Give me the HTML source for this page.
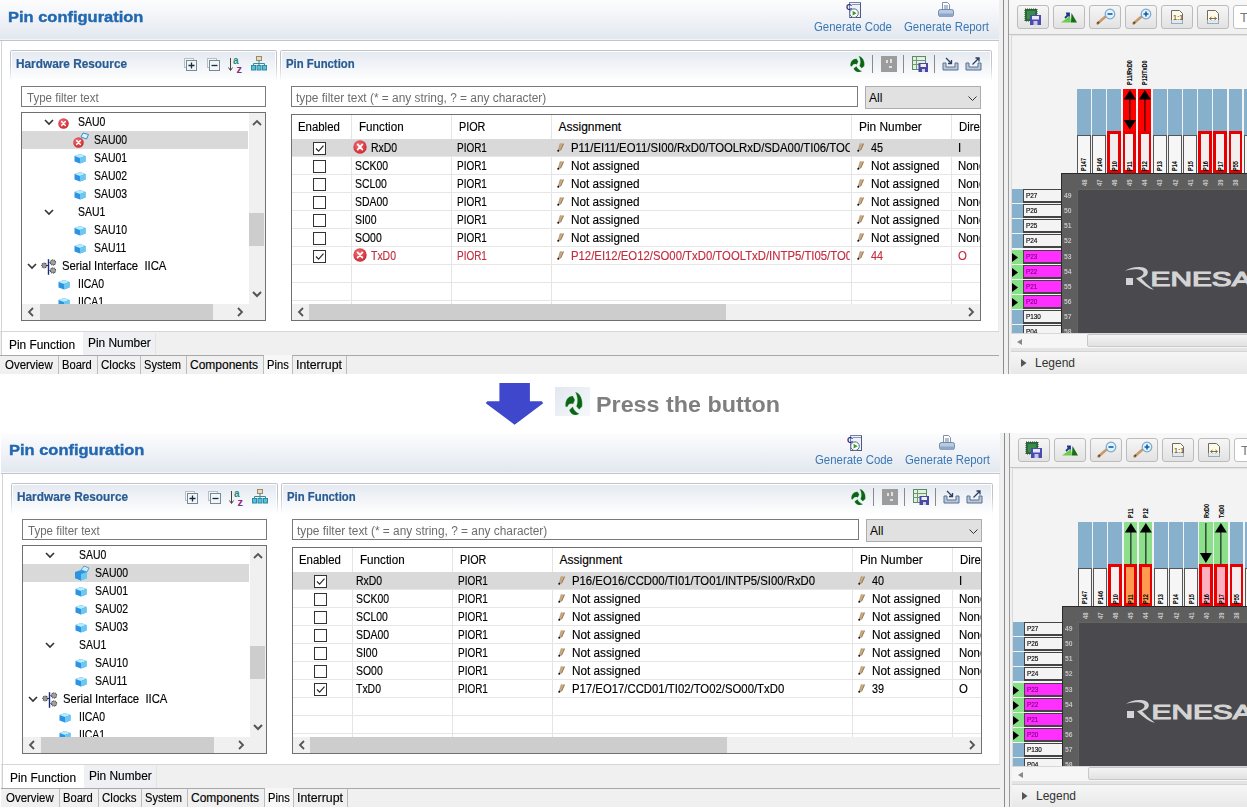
<!DOCTYPE html><html><head><meta charset="utf-8"><style>
*{margin:0;padding:0}
html,body{width:1247px;height:809px;overflow:hidden;background:#fff;font-family:"Liberation Sans", sans-serif;position:relative}
.ab{position:absolute}
svg.ab{display:block}
.panel{position:absolute;width:1247px;height:374px;overflow:hidden}
.hdr{left:0;top:0;width:1003px;height:40px;background:linear-gradient(#fdfdfe,#e2e7ef)}
.title{left:8px;top:8px;font-size:15.4px;font-weight:bold;color:#2268b0;white-space:nowrap;-webkit-text-stroke:.4px currentColor;transform:scaleX(1.07);transform-origin:0 0}
.link{font-size:12px;transform:scaleX(.95);transform-origin:0 0;color:#3a78b4;white-space:nowrap}
.sec{top:50px;height:31px;border-radius:2px 2px 0 0;background:linear-gradient(#e3e8f0,#fff);}
.sec::before{content:"";position:absolute;left:0;top:0;right:0;bottom:0;border:1px solid #c0c4ca;border-bottom:none;border-radius:2px 2px 0 0;box-shadow:inset 1px 1px 0 #fff,inset -1px 0 0 #fff;-webkit-mask:linear-gradient(#000 40%,transparent)}
.sect{font-size:12.2px;font-weight:bold;color:#275b92;white-space:nowrap;-webkit-text-stroke:.2px currentColor;transform-origin:0 0}
.inp{border:1px solid #7a7a7a;background:#fff;font-size:12px;white-space:nowrap;overflow:hidden}
.ph{position:absolute;left:4px;top:4px;color:#6d6d6d;transform-origin:0 0}
.combo{background:#e1e1e1;border:1px solid #adadad;font-size:12px}
.tree,.tbl{border:1px solid #707070;background:#fff;overflow:hidden}
.tt{font-size:12px;white-space:nowrap;color:#000;transform-origin:0 0;-webkit-text-stroke:.15px currentColor}
.clip{overflow:hidden}
.tab{font-size:12px;white-space:nowrap;color:#000;transform-origin:0 0;-webkit-text-stroke:.15px currentColor}
.cb{width:11px;height:11px;border:1px solid #333;background:#fff}
.btn{width:32px;height:24px;border:1px solid #bcbcbc;border-radius:3px;background:linear-gradient(#f6f6f6,#e2e2e2);box-sizing:border-box}
</style></head><body><div class="panel" style="left:0px;top:0px"><div class="ab hdr"></div><div class="ab title">Pin configuration</div><div class="ab link" style="left:814px;top:20px">Generate Code</div><div class="ab link" style="left:903.5px;top:20px">Generate Report</div><svg class="ab" style="left:846px;top:2px" width="16" height="16" viewBox="0 0 16 16"><rect x="3.5" y="0.5" width="11" height="15" fill="#eef2f8" stroke="#7080a8"/><path d="M14.5 1v15M4 15.5h11" stroke="#4a5a80"/><path d="M6.5 2.5h7" stroke="#2a3a80" stroke-dasharray="1 1"/><text x="0" y="8" font-size="8.5" font-family="Liberation Sans" fill="#1e2a78" font-weight="bold">C</text><circle cx="8" cy="11.2" r="4.3" fill="#fff" stroke="#5a6a8a"/><path d="M6.6 8.8L10.6 11.2L6.6 13.6Z" fill="#3a9a2a"/></svg><svg class="ab" style="left:938px;top:2px" width="16" height="16" viewBox="0 0 16 16"><path d="M4.5 0.5h5l2 2v6h-7z" fill="#fff" stroke="#8090a8"/><path d="M6 4h4M6 6h4" stroke="#6a7aa0"/><rect x="0.5" y="7.5" width="15" height="7" rx="2" fill="#b8cae2" stroke="#7088aa"/><rect x="1" y="11.5" width="14" height="3.5" rx="1" fill="#8ea6c6"/></svg><div class="ab" style="left:0;top:39px;width:999px;height:1px;background:#f2f6f8"></div><div class="ab" style="left:0;top:40px;width:999px;height:1px;background:#bfc5ca"></div><div class="ab" style="left:0;top:41px;width:999px;height:1px;background:#e2e6e9"></div><div class="ab" style="left:0;top:41px;width:999px;height:290px;background:#fff"></div><div class="ab" style="left:1px;top:41px;width:1px;height:315px;background:#d4d4d4"></div><div class="ab" style="left:998px;top:41px;width:1px;height:290px;background:#ececec"></div><div class="ab sec" style="left:10px;width:267px"></div><div class="ab sec" style="left:280px;width:712px"></div><div class="ab sect" style="left:16px;top:57px;transform:scaleX(.97)">Hardware Resource</div><div class="ab sect" style="left:286px;top:57px;transform:scaleX(.93)">Pin Function</div><svg class="ab" style="left:184px;top:58px" width="13" height="13" viewBox="0 0 13 13"><rect x="0.5" y="0.5" width="9" height="9" fill="#f4f8fb" stroke="#b4c0c8"/><rect x="2.5" y="2.5" width="10" height="10" fill="#f0f6fa" stroke="#7a8894"/><path d="M4.5 7.5h6M7.5 4.5v6" stroke="#1a2a3a" stroke-width="1.3"/></svg><svg class="ab" style="left:207px;top:58px" width="13" height="13" viewBox="0 0 13 13"><rect x="0.5" y="0.5" width="9" height="9" fill="#f4f8fb" stroke="#b4c0c8"/><rect x="2.5" y="2.5" width="10" height="10" fill="#f0f6fa" stroke="#7a8894"/><path d="M4.5 7.5h6" stroke="#1a2a3a" stroke-width="1.3"/></svg><svg class="ab" style="left:228px;top:56px" width="17" height="17" viewBox="0 0 17 17"><path d="M2.5 2v12M0.5 11.5l2 3l2-3" stroke="#444" fill="none"/><text x="5" y="7.5" font-size="10" font-weight="bold" font-family="Liberation Sans" fill="#2a8a7a">a</text><text x="8.5" y="16.5" font-size="11" font-weight="bold" font-family="Liberation Sans" fill="#8a2a7a">z</text></svg><svg class="ab" style="left:251px;top:56px" width="16" height="15" viewBox="0 0 16 15"><rect x="5.5" y="0.5" width="5" height="4" fill="#e8dcc0" stroke="#9a8a6a"/><path d="M8 4.5v3M2.5 7.5h11M2.5 7.5v2M8 7.5v2M13.5 7.5v2" stroke="#3a8a9a"/><rect x="0.5" y="9.5" width="4" height="4.5" fill="#5ac0d8" stroke="#2a8aa8"/><rect x="6" y="9.5" width="4" height="4.5" fill="#5ac0d8" stroke="#2a8aa8"/><rect x="11.5" y="9.5" width="4" height="4.5" fill="#5ac0d8" stroke="#2a8aa8"/></svg><svg class="ab" style="left:850px;top:56px" width="15" height="16" viewBox="0 0 16 16" preserveAspectRatio="none"><g fill="#0d6418" stroke="#7ad87a" stroke-width=".5" stroke-opacity=".5"><path d="M0.4 10C0.2 5.5 3 2.6 7 2.8L8.8 5.5L7.2 8.4C4.6 7.6 2.9 8.4 2.1 10.4Z"/><path d="M9.3 0C13.5 1 16 5 15.2 10L12.6 12.2L10.2 10C11.6 6.5 11.4 3.5 9.3 0Z"/><path d="M3.8 12.6L6.9 10.3C7.8 12.6 9.5 14 12.6 15.2C8.5 17.2 5.2 15.6 3.8 12.6Z"/></g></svg><div class="ab" style="left:872px;top:55px;width:1px;height:18px;background:#8a8a8a"></div><div class="ab" style="left:903px;top:55px;width:1px;height:18px;background:#8a8a8a"></div><div class="ab" style="left:934px;top:55px;width:1px;height:18px;background:#8a8a8a"></div><div class="ab" style="left:881px;top:56px;width:16px;height:16px;background:#9c9c9c"><div class="ab" style="left:5px;top:4px;width:2px;height:3px;background:#e0e0e0"></div><div class="ab" style="left:9px;top:3px;width:2px;height:4px;background:#e0e0e0"></div><div class="ab" style="left:8px;top:10px;width:3px;height:2px;background:#e0e0e0"></div></div><svg class="ab" style="left:912px;top:56px" width="16" height="16" viewBox="0 0 16 16"><rect x="0.5" y="0.5" width="13" height="13" fill="#e4f0dc" stroke="#5a8a6a"/><path d="M0.5 4.5h13M0.5 8.5h13M4.5 0.5v13" stroke="#6a9a7a"/><rect x="6.5" y="7" width="9.5" height="9" fill="#4848a8"/><rect x="8.5" y="8" width="5.5" height="3" fill="#f0f0f0"/><rect x="10" y="13" width="3" height="3" fill="#d0d0e0"/></svg><svg class="ab" style="left:942px;top:57px" width="17" height="14" viewBox="0 0 17 14"><path d="M1 6v7h15V6h-3v4H4V6z" fill="#b8c8dc" stroke="#5a7090"/><path d="M4 1l5.5 5.5M9.5 3v3.5H6" stroke="#2a4060" fill="none" stroke-width="1.3"/></svg><svg class="ab" style="left:965px;top:57px" width="17" height="14" viewBox="0 0 17 14"><path d="M1 6v7h15V6h-3v4H4V6z" fill="#b8c8dc" stroke="#5a7090"/><path d="M7.5 7.5L14 1M10.5 1H14v3.5" stroke="#2a4060" fill="none" stroke-width="1.3"/></svg><div class="ab inp" style="left:21px;top:86px;width:243px;height:19px"><span class="ph" style="left:5px;transform:scaleX(.96)">Type filter text</span></div><div class="ab inp" style="left:291px;top:86px;width:565px;height:19px"><span class="ph" style="transform:scaleX(.99)">type filter text (* = any string, ? = any character)</span></div><div class="ab combo" style="left:865px;top:86px;width:114px;height:21px"><span style="position:absolute;left:3px;top:4px">All</span><svg class="ab" style="left:102px;top:9px" width="10" height="6"><path d="M0.5 0.5l4 4l4-4" stroke="#333" fill="none"/></svg></div><div class="ab tree" style="left:21px;top:112px;width:243px;height:207px"><svg class="ab" style="left:22px;top:6px" width="10" height="7"><path d="M1 1l4 4l4-4" stroke="#333" stroke-width="1.6" fill="none"/></svg><svg class="ab" style="left:36px;top:5px" width="11" height="11" viewBox="0 0 14 14"><defs><radialGradient id="eg" cx="40%" cy="35%" r="70%"><stop offset="0" stop-color="#f07078"/><stop offset="1" stop-color="#c8262e"/></radialGradient></defs><circle cx="7" cy="7" r="6.7" fill="url(#eg)"/><path d="M4.6 4.4L9.4 9.6M9.4 4.4L4.6 9.6" stroke="#fff" stroke-width="1.7" stroke-linecap="round"/></svg><div class="ab tt" style="left:56px;top:2px;transform:scaleX(0.87);">SAU0</div><div class="ab" style="left:0;top:18px;width:226px;height:18px;background:#d9d9d9"></div><svg class="ab" style="left:58px;top:19px" width="9" height="8" viewBox="0 0 9 8"><path d="M1 5L3 1L8.5 2.5L6.5 7Z" fill="#dcf4fc" stroke="#3a8ac8" stroke-width="1"/></svg><svg class="ab" style="left:51px;top:24px" width="11" height="11" viewBox="0 0 14 14"><defs><radialGradient id="eg" cx="40%" cy="35%" r="70%"><stop offset="0" stop-color="#f07078"/><stop offset="1" stop-color="#c8262e"/></radialGradient></defs><circle cx="7" cy="7" r="6.7" fill="url(#eg)"/><path d="M4.6 4.4L9.4 9.6M9.4 4.4L4.6 9.6" stroke="#fff" stroke-width="1.7" stroke-linecap="round"/></svg><div class="ab tt" style="left:72px;top:20px;transform:scaleX(0.87);">SAU00</div><svg class="ab" style="left:52px;top:40px" width="12" height="11" viewBox="0 0 12 11"><path d="M0.5 3L6 1L11.5 3L11.5 8.5L6 10.5L0.5 8.5Z" fill="#2d94e2"/><path d="M0.5 3L6 1L11.5 3L6 5Z" fill="#b5ecfb"/><path d="M6 5L11.5 3L11.5 8.5L6 10.5Z" fill="#6cc8f2"/></svg><div class="ab tt" style="left:72px;top:38px;transform:scaleX(0.87);">SAU01</div><svg class="ab" style="left:52px;top:58px" width="12" height="11" viewBox="0 0 12 11"><path d="M0.5 3L6 1L11.5 3L11.5 8.5L6 10.5L0.5 8.5Z" fill="#2d94e2"/><path d="M0.5 3L6 1L11.5 3L6 5Z" fill="#b5ecfb"/><path d="M6 5L11.5 3L11.5 8.5L6 10.5Z" fill="#6cc8f2"/></svg><div class="ab tt" style="left:72px;top:56px;transform:scaleX(0.87);">SAU02</div><svg class="ab" style="left:52px;top:76px" width="12" height="11" viewBox="0 0 12 11"><path d="M0.5 3L6 1L11.5 3L11.5 8.5L6 10.5L0.5 8.5Z" fill="#2d94e2"/><path d="M0.5 3L6 1L11.5 3L6 5Z" fill="#b5ecfb"/><path d="M6 5L11.5 3L11.5 8.5L6 10.5Z" fill="#6cc8f2"/></svg><div class="ab tt" style="left:72px;top:74px;transform:scaleX(0.87);">SAU03</div><svg class="ab" style="left:22px;top:96px" width="10" height="7"><path d="M1 1l4 4l4-4" stroke="#333" stroke-width="1.6" fill="none"/></svg><div class="ab tt" style="left:56px;top:92px;transform:scaleX(0.87);">SAU1</div><svg class="ab" style="left:52px;top:112px" width="12" height="11" viewBox="0 0 12 11"><path d="M0.5 3L6 1L11.5 3L11.5 8.5L6 10.5L0.5 8.5Z" fill="#2d94e2"/><path d="M0.5 3L6 1L11.5 3L6 5Z" fill="#b5ecfb"/><path d="M6 5L11.5 3L11.5 8.5L6 10.5Z" fill="#6cc8f2"/></svg><div class="ab tt" style="left:72px;top:110px;transform:scaleX(0.87);">SAU10</div><svg class="ab" style="left:52px;top:130px" width="12" height="11" viewBox="0 0 12 11"><path d="M0.5 3L6 1L11.5 3L11.5 8.5L6 10.5L0.5 8.5Z" fill="#2d94e2"/><path d="M0.5 3L6 1L11.5 3L6 5Z" fill="#b5ecfb"/><path d="M6 5L11.5 3L11.5 8.5L6 10.5Z" fill="#6cc8f2"/></svg><div class="ab tt" style="left:72px;top:128px;transform:scaleX(0.87);">SAU11</div><svg class="ab" style="left:5px;top:150px" width="10" height="7"><path d="M1 1l4 4l4-4" stroke="#333" stroke-width="1.6" fill="none"/></svg><svg class="ab" style="left:19px;top:145px" width="17" height="17" viewBox="0 0 17 17"><circle cx="3.2" cy="7.5" r="2.4" fill="#9a9a9a" stroke="#3a3a3a" stroke-width="1.1" stroke-dasharray=".9 .7"/><path d="M5.5 7.5h1.5M8.5 4.5h1M8.5 12.5h1" stroke="#1a2a7a" stroke-width="1.1"/><path d="M7.5 1.2v15.6" stroke="#1a2a7a" stroke-width="1.4"/><circle cx="12" cy="4.5" r="2.6" fill="#a0a0a0" stroke="#3a3a3a" stroke-width="1.1" stroke-dasharray=".9 .7"/><circle cx="12" cy="12.5" r="2.6" fill="#a0a0a0" stroke="#3a3a3a" stroke-width="1.1" stroke-dasharray=".9 .7"/></svg><div class="ab tt" style="left:40px;top:146px;transform:scaleX(0.943);">Serial Interface&nbsp; IICA</div><svg class="ab" style="left:36px;top:166px" width="12" height="11" viewBox="0 0 12 11"><path d="M0.5 3L6 1L11.5 3L11.5 8.5L6 10.5L0.5 8.5Z" fill="#2d94e2"/><path d="M0.5 3L6 1L11.5 3L6 5Z" fill="#b5ecfb"/><path d="M6 5L11.5 3L11.5 8.5L6 10.5Z" fill="#6cc8f2"/></svg><div class="ab tt" style="left:56px;top:164px;transform:scaleX(0.87);">IICA0</div><svg class="ab" style="left:36px;top:184px" width="12" height="11" viewBox="0 0 12 11"><path d="M0.5 3L6 1L11.5 3L11.5 8.5L6 10.5L0.5 8.5Z" fill="#2d94e2"/><path d="M0.5 3L6 1L11.5 3L6 5Z" fill="#b5ecfb"/><path d="M6 5L11.5 3L11.5 8.5L6 10.5Z" fill="#6cc8f2"/></svg><div class="ab tt" style="left:56px;top:182px;transform:scaleX(0.87);">IICA1</div><div class="ab" style="left:227px;top:0;width:16px;height:191px;background:#f0f0f0"></div><svg class="ab" style="left:230px;top:6px" width="10" height="7"><path d="M1 6l4-4l4 4" stroke="#555" stroke-width="1.8" fill="none"/></svg><div class="ab" style="left:227px;top:100px;width:15px;height:33px;background:#cdcdcd"></div><svg class="ab" style="left:230px;top:178px" width="10" height="7"><path d="M1 1l4 4l4-4" stroke="#555" stroke-width="2" fill="none"/></svg><div class="ab" style="left:0;top:191px;width:243px;height:16px;background:#f0f0f0"></div><svg class="ab" style="left:5px;top:194px" width="7" height="10"><path d="M6 1l-4 4l4 4" stroke="#555" stroke-width="1.8" fill="none"/></svg><div class="ab" style="left:18px;top:191px;width:173px;height:16px;background:#cdcdcd"></div><svg class="ab" style="left:215px;top:194px" width="7" height="10"><path d="M1 1l4 4l-4 4" stroke="#555" stroke-width="1.8" fill="none"/></svg></div><div class="ab tbl" style="left:291px;top:114px;width:688px;height:205px"><div class="ab tt" style="left:6px;top:5px;transform:scaleX(0.95);">Enabled</div><div class="ab tt" style="left:66.5px;top:5px;transform:scaleX(0.97);">Function</div><div class="ab tt" style="left:166.5px;top:5px;transform:scaleX(0.9);">PIOR</div><div class="ab tt" style="left:266.5px;top:5px;transform:scaleX(1.0);">Assignment</div><div class="ab tt" style="left:566.5px;top:5px;transform:scaleX(0.99);">Pin Number</div><div class="ab tt" style="left:666.5px;top:5px;transform:scaleX(0.95);">Dire</div><div class="ab" style="left:59px;top:0;width:1px;height:189px;background:#e4e4e4"></div><div class="ab" style="left:159px;top:0;width:1px;height:189px;background:#e4e4e4"></div><div class="ab" style="left:259px;top:0;width:1px;height:189px;background:#e4e4e4"></div><div class="ab" style="left:559px;top:0;width:1px;height:189px;background:#e4e4e4"></div><div class="ab" style="left:659px;top:0;width:1px;height:189px;background:#e4e4e4"></div><div class="ab" style="left:0;top:41px;width:688px;height:1px;background:#e6e6e6"></div><div class="ab" style="left:0;top:59px;width:688px;height:1px;background:#e6e6e6"></div><div class="ab" style="left:0;top:77px;width:688px;height:1px;background:#e6e6e6"></div><div class="ab" style="left:0;top:95px;width:688px;height:1px;background:#e6e6e6"></div><div class="ab" style="left:0;top:113px;width:688px;height:1px;background:#e6e6e6"></div><div class="ab" style="left:0;top:131px;width:688px;height:1px;background:#e6e6e6"></div><div class="ab" style="left:0;top:149px;width:688px;height:1px;background:#e6e6e6"></div><div class="ab" style="left:0;top:167px;width:688px;height:1px;background:#e6e6e6"></div><div class="ab" style="left:0;top:185px;width:688px;height:1px;background:#e6e6e6"></div><div class="ab" style="left:0;top:24px;width:688px;height:17px;background:#d9d9d9"></div><div class="ab cb" style="left:21px;top:27px"><svg width="13" height="13" style="position:absolute;left:-1px;top:-1px;display:block"><path d="M3 6.5l2.6 2.6l4.9-5.4" stroke="#2a2a2a" stroke-width="1.2" fill="none"/></svg></div><svg class="ab" style="left:61px;top:25px" width="14" height="14" viewBox="0 0 14 14"><defs><radialGradient id="eg" cx="40%" cy="35%" r="70%"><stop offset="0" stop-color="#f07078"/><stop offset="1" stop-color="#c8262e"/></radialGradient></defs><circle cx="7" cy="7" r="6.7" fill="url(#eg)"/><path d="M4.6 4.4L9.4 9.6M9.4 4.4L4.6 9.6" stroke="#fff" stroke-width="1.7" stroke-linecap="round"/></svg><div class="ab tt" style="left:79px;top:26px;transform:scaleX(0.87);color:#000">RxD0</div><div class="ab tt" style="left:165px;top:26px;transform:scaleX(0.83);color:#000">PIOR1</div><svg class="ab" style="left:265px;top:28px" width="7" height="9" viewBox="0 0 7 9"><path d="M3.3 0.3L6.6 0.6L3.6 7.3L0.9 8.3Z" fill="#c9aa84"/><path d="M6.6 0.6L3.6 7.3" stroke="#8a6a48" stroke-width=".9"/><path d="M3.3 0.3L0.9 8.3" stroke="#a88860" stroke-width=".6"/><circle cx="1.3" cy="7.8" r="1" fill="#111"/></svg><div class="ab tt" style="left:279px;top:26px;transform:scaleX(0.945);width:295.2px;overflow:hidden;color:#000">P11/EI11/EO11/SI00/RxD0/TOOLRxD/SDA00/TI06/TOO</div><svg class="ab" style="left:565px;top:28px" width="7" height="9" viewBox="0 0 7 9"><path d="M3.3 0.3L6.6 0.6L3.6 7.3L0.9 8.3Z" fill="#c9aa84"/><path d="M6.6 0.6L3.6 7.3" stroke="#8a6a48" stroke-width=".9"/><path d="M3.3 0.3L0.9 8.3" stroke="#a88860" stroke-width=".6"/><circle cx="1.3" cy="7.8" r="1" fill="#111"/></svg><div class="ab tt" style="left:579px;top:26px;transform:scaleX(0.9);color:#000">45</div><div class="ab tt" style="left:666px;top:26px;transform:scaleX(0.95);width:23.2px;overflow:hidden;color:#000">I</div><div class="ab cb" style="left:21px;top:45px"></div><div class="ab tt" style="left:63px;top:44px;transform:scaleX(0.87);color:#000">SCK00</div><div class="ab tt" style="left:165px;top:44px;transform:scaleX(0.83);color:#000">PIOR1</div><svg class="ab" style="left:265px;top:46px" width="7" height="9" viewBox="0 0 7 9"><path d="M3.3 0.3L6.6 0.6L3.6 7.3L0.9 8.3Z" fill="#c9aa84"/><path d="M6.6 0.6L3.6 7.3" stroke="#8a6a48" stroke-width=".9"/><path d="M3.3 0.3L0.9 8.3" stroke="#a88860" stroke-width=".6"/><circle cx="1.3" cy="7.8" r="1" fill="#111"/></svg><div class="ab tt" style="left:279px;top:44px;transform:scaleX(0.98);width:284.7px;overflow:hidden;color:#000">Not assigned</div><svg class="ab" style="left:565px;top:46px" width="7" height="9" viewBox="0 0 7 9"><path d="M3.3 0.3L6.6 0.6L3.6 7.3L0.9 8.3Z" fill="#c9aa84"/><path d="M6.6 0.6L3.6 7.3" stroke="#8a6a48" stroke-width=".9"/><path d="M3.3 0.3L0.9 8.3" stroke="#a88860" stroke-width=".6"/><circle cx="1.3" cy="7.8" r="1" fill="#111"/></svg><div class="ab tt" style="left:579px;top:44px;transform:scaleX(0.98);color:#000">Not assigned</div><div class="ab tt" style="left:666px;top:44px;transform:scaleX(0.95);width:23.2px;overflow:hidden;color:#000">None</div><div class="ab cb" style="left:21px;top:63px"></div><div class="ab tt" style="left:63px;top:62px;transform:scaleX(0.87);color:#000">SCL00</div><div class="ab tt" style="left:165px;top:62px;transform:scaleX(0.83);color:#000">PIOR1</div><svg class="ab" style="left:265px;top:64px" width="7" height="9" viewBox="0 0 7 9"><path d="M3.3 0.3L6.6 0.6L3.6 7.3L0.9 8.3Z" fill="#c9aa84"/><path d="M6.6 0.6L3.6 7.3" stroke="#8a6a48" stroke-width=".9"/><path d="M3.3 0.3L0.9 8.3" stroke="#a88860" stroke-width=".6"/><circle cx="1.3" cy="7.8" r="1" fill="#111"/></svg><div class="ab tt" style="left:279px;top:62px;transform:scaleX(0.98);width:284.7px;overflow:hidden;color:#000">Not assigned</div><svg class="ab" style="left:565px;top:64px" width="7" height="9" viewBox="0 0 7 9"><path d="M3.3 0.3L6.6 0.6L3.6 7.3L0.9 8.3Z" fill="#c9aa84"/><path d="M6.6 0.6L3.6 7.3" stroke="#8a6a48" stroke-width=".9"/><path d="M3.3 0.3L0.9 8.3" stroke="#a88860" stroke-width=".6"/><circle cx="1.3" cy="7.8" r="1" fill="#111"/></svg><div class="ab tt" style="left:579px;top:62px;transform:scaleX(0.98);color:#000">Not assigned</div><div class="ab tt" style="left:666px;top:62px;transform:scaleX(0.95);width:23.2px;overflow:hidden;color:#000">None</div><div class="ab cb" style="left:21px;top:81px"></div><div class="ab tt" style="left:63px;top:80px;transform:scaleX(0.87);color:#000">SDA00</div><div class="ab tt" style="left:165px;top:80px;transform:scaleX(0.83);color:#000">PIOR1</div><svg class="ab" style="left:265px;top:82px" width="7" height="9" viewBox="0 0 7 9"><path d="M3.3 0.3L6.6 0.6L3.6 7.3L0.9 8.3Z" fill="#c9aa84"/><path d="M6.6 0.6L3.6 7.3" stroke="#8a6a48" stroke-width=".9"/><path d="M3.3 0.3L0.9 8.3" stroke="#a88860" stroke-width=".6"/><circle cx="1.3" cy="7.8" r="1" fill="#111"/></svg><div class="ab tt" style="left:279px;top:80px;transform:scaleX(0.98);width:284.7px;overflow:hidden;color:#000">Not assigned</div><svg class="ab" style="left:565px;top:82px" width="7" height="9" viewBox="0 0 7 9"><path d="M3.3 0.3L6.6 0.6L3.6 7.3L0.9 8.3Z" fill="#c9aa84"/><path d="M6.6 0.6L3.6 7.3" stroke="#8a6a48" stroke-width=".9"/><path d="M3.3 0.3L0.9 8.3" stroke="#a88860" stroke-width=".6"/><circle cx="1.3" cy="7.8" r="1" fill="#111"/></svg><div class="ab tt" style="left:579px;top:80px;transform:scaleX(0.98);color:#000">Not assigned</div><div class="ab tt" style="left:666px;top:80px;transform:scaleX(0.95);width:23.2px;overflow:hidden;color:#000">None</div><div class="ab cb" style="left:21px;top:99px"></div><div class="ab tt" style="left:63px;top:98px;transform:scaleX(0.87);color:#000">SI00</div><div class="ab tt" style="left:165px;top:98px;transform:scaleX(0.83);color:#000">PIOR1</div><svg class="ab" style="left:265px;top:100px" width="7" height="9" viewBox="0 0 7 9"><path d="M3.3 0.3L6.6 0.6L3.6 7.3L0.9 8.3Z" fill="#c9aa84"/><path d="M6.6 0.6L3.6 7.3" stroke="#8a6a48" stroke-width=".9"/><path d="M3.3 0.3L0.9 8.3" stroke="#a88860" stroke-width=".6"/><circle cx="1.3" cy="7.8" r="1" fill="#111"/></svg><div class="ab tt" style="left:279px;top:98px;transform:scaleX(0.98);width:284.7px;overflow:hidden;color:#000">Not assigned</div><svg class="ab" style="left:565px;top:100px" width="7" height="9" viewBox="0 0 7 9"><path d="M3.3 0.3L6.6 0.6L3.6 7.3L0.9 8.3Z" fill="#c9aa84"/><path d="M6.6 0.6L3.6 7.3" stroke="#8a6a48" stroke-width=".9"/><path d="M3.3 0.3L0.9 8.3" stroke="#a88860" stroke-width=".6"/><circle cx="1.3" cy="7.8" r="1" fill="#111"/></svg><div class="ab tt" style="left:579px;top:98px;transform:scaleX(0.98);color:#000">Not assigned</div><div class="ab tt" style="left:666px;top:98px;transform:scaleX(0.95);width:23.2px;overflow:hidden;color:#000">None</div><div class="ab cb" style="left:21px;top:117px"></div><div class="ab tt" style="left:63px;top:116px;transform:scaleX(0.87);color:#000">SO00</div><div class="ab tt" style="left:165px;top:116px;transform:scaleX(0.83);color:#000">PIOR1</div><svg class="ab" style="left:265px;top:118px" width="7" height="9" viewBox="0 0 7 9"><path d="M3.3 0.3L6.6 0.6L3.6 7.3L0.9 8.3Z" fill="#c9aa84"/><path d="M6.6 0.6L3.6 7.3" stroke="#8a6a48" stroke-width=".9"/><path d="M3.3 0.3L0.9 8.3" stroke="#a88860" stroke-width=".6"/><circle cx="1.3" cy="7.8" r="1" fill="#111"/></svg><div class="ab tt" style="left:279px;top:116px;transform:scaleX(0.98);width:284.7px;overflow:hidden;color:#000">Not assigned</div><svg class="ab" style="left:565px;top:118px" width="7" height="9" viewBox="0 0 7 9"><path d="M3.3 0.3L6.6 0.6L3.6 7.3L0.9 8.3Z" fill="#c9aa84"/><path d="M6.6 0.6L3.6 7.3" stroke="#8a6a48" stroke-width=".9"/><path d="M3.3 0.3L0.9 8.3" stroke="#a88860" stroke-width=".6"/><circle cx="1.3" cy="7.8" r="1" fill="#111"/></svg><div class="ab tt" style="left:579px;top:116px;transform:scaleX(0.98);color:#000">Not assigned</div><div class="ab tt" style="left:666px;top:116px;transform:scaleX(0.95);width:23.2px;overflow:hidden;color:#000">None</div><div class="ab cb" style="left:21px;top:135px"><svg width="13" height="13" style="position:absolute;left:-1px;top:-1px;display:block"><path d="M3 6.5l2.6 2.6l4.9-5.4" stroke="#2a2a2a" stroke-width="1.2" fill="none"/></svg></div><svg class="ab" style="left:61px;top:133px" width="14" height="14" viewBox="0 0 14 14"><defs><radialGradient id="eg" cx="40%" cy="35%" r="70%"><stop offset="0" stop-color="#f07078"/><stop offset="1" stop-color="#c8262e"/></radialGradient></defs><circle cx="7" cy="7" r="6.7" fill="url(#eg)"/><path d="M4.6 4.4L9.4 9.6M9.4 4.4L4.6 9.6" stroke="#fff" stroke-width="1.7" stroke-linecap="round"/></svg><div class="ab tt" style="left:79px;top:134px;transform:scaleX(0.87);color:#c42c3e">TxD0</div><div class="ab tt" style="left:165px;top:134px;transform:scaleX(0.83);color:#c42c3e">PIOR1</div><svg class="ab" style="left:265px;top:136px" width="7" height="9" viewBox="0 0 7 9"><path d="M3.3 0.3L6.6 0.6L3.6 7.3L0.9 8.3Z" fill="#c9aa84"/><path d="M6.6 0.6L3.6 7.3" stroke="#8a6a48" stroke-width=".9"/><path d="M3.3 0.3L0.9 8.3" stroke="#a88860" stroke-width=".6"/><circle cx="1.3" cy="7.8" r="1" fill="#111"/></svg><div class="ab tt" style="left:279px;top:134px;transform:scaleX(0.945);width:295.2px;overflow:hidden;color:#c42c3e">P12/EI12/EO12/SO00/TxD0/TOOLTxD/INTP5/TI05/TO0</div><svg class="ab" style="left:565px;top:136px" width="7" height="9" viewBox="0 0 7 9"><path d="M3.3 0.3L6.6 0.6L3.6 7.3L0.9 8.3Z" fill="#c9aa84"/><path d="M6.6 0.6L3.6 7.3" stroke="#8a6a48" stroke-width=".9"/><path d="M3.3 0.3L0.9 8.3" stroke="#a88860" stroke-width=".6"/><circle cx="1.3" cy="7.8" r="1" fill="#111"/></svg><div class="ab tt" style="left:579px;top:134px;transform:scaleX(0.9);color:#c42c3e">44</div><div class="ab tt" style="left:666px;top:134px;transform:scaleX(0.95);width:23.2px;overflow:hidden;color:#c42c3e">O</div><div class="ab" style="left:0;top:189px;width:688px;height:16px;background:#f0f0f0"></div><svg class="ab" style="left:5px;top:192px" width="7" height="10"><path d="M6 1l-4 4l4 4" stroke="#555" stroke-width="1.8" fill="none"/></svg><div class="ab" style="left:17px;top:189px;width:417px;height:16px;background:#cdcdcd"></div><svg class="ab" style="left:676px;top:192px" width="7" height="10"><path d="M1 1l4 4l-4 4" stroke="#555" stroke-width="1.8" fill="none"/></svg></div><div class="ab" style="left:0;top:331px;width:999px;height:24px;background:#f0f0f0"></div><div class="ab" style="left:0;top:331px;width:999px;height:1px;background:#d6d6d6"></div><div class="ab" style="left:1px;top:331px;width:1px;height:25px;background:#d0d0d0"></div><div class="ab" style="left:2px;top:332px;width:81px;height:23px;background:#fff"></div><div class="ab tab" style="left:9px;top:338px;transform:scaleX(0.99);">Pin Function</div><div class="ab" style="left:83px;top:333px;width:73px;height:22px;background:#eef0f3;border-right:1px solid #e2e2e2;box-sizing:border-box"></div><div class="ab tab" style="left:88px;top:336px;transform:scaleX(0.99);">Pin Number</div><div class="ab" style="left:0;top:355px;width:1001px;height:1px;background:#a8a8a8"></div><div class="ab" style="left:0;top:356px;width:999px;height:18px;background:#f0f0f0"></div><div class="ab tab" style="left:5px;top:358px;transform:scaleX(0.954);">Overview</div><div class="ab" style="left:58px;top:356px;width:1px;height:18px;background:#bcbcbc"></div><div class="ab tab" style="left:62px;top:358px;transform:scaleX(0.93);">Board</div><div class="ab" style="left:97px;top:356px;width:1px;height:18px;background:#bcbcbc"></div><div class="ab tab" style="left:101px;top:358px;transform:scaleX(0.96);">Clocks</div><div class="ab" style="left:140px;top:356px;width:1px;height:18px;background:#bcbcbc"></div><div class="ab tab" style="left:144px;top:358px;transform:scaleX(0.925);">System</div><div class="ab" style="left:186px;top:356px;width:1px;height:18px;background:#bcbcbc"></div><div class="ab tab" style="left:190px;top:358px;transform:scaleX(1.0);">Components</div><div class="ab" style="left:263px;top:356px;width:1px;height:18px;background:#bcbcbc"></div><div class="ab" style="left:264px;top:355px;width:28px;height:19px;background:#f7f7f7"></div><div class="ab tab" style="left:267px;top:358px;transform:scaleX(0.93);">Pins</div><div class="ab" style="left:292px;top:356px;width:1px;height:18px;background:#bcbcbc"></div><div class="ab tab" style="left:296px;top:358px;transform:scaleX(1.03);">Interrupt</div><div class="ab" style="left:346px;top:356px;width:1px;height:18px;background:#bcbcbc"></div><div class="ab" style="left:999px;top:0;width:10px;height:374px;background:#f0f0f0"></div><div class="ab" style="left:1003px;top:0;width:1px;height:374px;background:#8c8c8c"></div><div class="ab" style="left:1008px;top:0;width:1px;height:374px;background:#9c9c9c"></div><div class="ab" style="left:1009px;top:0;width:238px;height:374px;background:#f0f0f0"></div><div class="ab" style="left:1009px;top:0;width:238px;height:34px;background:linear-gradient(#f8f8f8,#f0f0f0)"></div><div class="ab btn" style="left:1017px;top:5px"></div><div class="ab btn" style="left:1053px;top:5px"></div><div class="ab btn" style="left:1089px;top:5px"></div><div class="ab btn" style="left:1125px;top:5px"></div><div class="ab btn" style="left:1161px;top:5px"></div><div class="ab btn" style="left:1197px;top:5px"></div><div class="ab" style="left:1233px;top:5px;width:30px;height:24px;background:#fff;border:1px solid #c0c0c0;border-radius:3px;box-sizing:border-box"><span style="position:absolute;left:6px;top:4px;color:#777;font-size:13px">T</span></div><svg class="ab" style="left:1024px;top:8px" width="18" height="18" viewBox="0 0 18 18"><path d="M1 1h12v12h-12z" fill="#2d6a3a" stroke="#2a4a2a" stroke-dasharray="1 1"/><path d="M3 3h8v8h-8z" fill="#3a8a4a"/><rect x="6" y="7" width="11" height="10" fill="#4a4ab0"/><rect x="8" y="8" width="7" height="3.5" fill="#e8e8f8"/><rect x="9.5" y="13" width="4" height="4" fill="#c8c8e8"/></svg><svg class="ab" style="left:1061px;top:12px" width="17" height="11" viewBox="0 0 17 11"><path d="M0 10.5L9 4L10 10.5Z" fill="#6acc4a"/><path d="M10 10.5L10.5 1L16 10.5Z" fill="#1a6a1a"/><path d="M4 6L7.5 2.5M5 1.5h3v3" stroke="#1a3a8a" stroke-width="1.8" fill="none"/></svg><svg class="ab" style="left:1096px;top:8px" width="20" height="17" viewBox="0 0 20 17"><path d="M1.5 15.5L9 9" stroke="#c89a6a" stroke-width="2.6" stroke-linecap="round"/><path d="M1.5 15.5L3 14" stroke="#6a4a2a" stroke-width="2"/><circle cx="14" cy="6" r="4.8" fill="#dff2ff" stroke="#7aa8cc" stroke-width="1.2"/><path d="M11.5 6h5" stroke="#1a5a9a" stroke-width="1.6"/></svg><svg class="ab" style="left:1132px;top:8px" width="20" height="17" viewBox="0 0 20 17"><path d="M1.5 15.5L9 9" stroke="#c89a6a" stroke-width="2.6" stroke-linecap="round"/><path d="M1.5 15.5L3 14" stroke="#6a4a2a" stroke-width="2"/><circle cx="14" cy="6" r="4.8" fill="#dff2ff" stroke="#7aa8cc" stroke-width="1.2"/><path d="M11.5 6h5M14 3.5v5" stroke="#1a5a9a" stroke-width="1.6"/></svg><svg class="ab" style="left:1171px;top:10px" width="12" height="14" viewBox="0 0 12 14"><path d="M0.5 0.5h8l3 3v10h-11z" fill="#fdfbe8" stroke="#6a6a6a"/><path d="M0.5 10h11v3.5h-11z" fill="#dbeaf8"/><text x="2" y="10" font-size="7" font-weight="bold" font-family="Liberation Sans" fill="#8a6a3a">1:1</text></svg><svg class="ab" style="left:1207px;top:10px" width="12" height="14" viewBox="0 0 12 14"><path d="M0.5 0.5h8l3 3v10h-11z" fill="#fdfbe8" stroke="#6a6a6a"/><path d="M0.5 10h11v3.5h-11z" fill="#dbeaf8"/><path d="M2.5 8.5h7M2.5 8.5l2-1.5M2.5 8.5l2 1.5M9.5 8.5l-2-1.5M9.5 8.5l-2 1.5" stroke="#8a6a3a" stroke-width="1"/></svg><div class="ab" style="left:1009px;top:34px;width:238px;height:1px;background:#c6c6c6"></div><div class="ab" style="left:1011px;top:35px;width:236px;height:1px;background:#e4e4e4"></div><div class="ab" style="left:1011px;top:35px;width:1px;height:298px;background:#dadada"></div><div class="ab" style="left:1012px;top:36px;width:235px;height:297px;background:#f3f3f3;overflow:hidden"><div class="ab" style="left:65.1px;top:53px;width:13.75px;height:46px;background:#86b0cc"></div><div class="ab" style="left:65.1px;top:99px;width:13.75px;height:38px;background:#f6f6f6;border:1px solid #555;border-bottom:none;box-sizing:border-box"></div><div class="ab" style="left:71.975px;top:135px;width:0;height:0"><div style="position:absolute;left:0;top:0;transform:rotate(-90deg) scaleX(0.8);transform-origin:0 0;white-space:nowrap;font-size:7px;line-height:7px;height:7px;color:#000;font-weight:bold;margin-left:-3.50px">P147</div></div><div class="ab" style="left:80.25px;top:53px;width:13.75px;height:46px;background:#86b0cc"></div><div class="ab" style="left:80.25px;top:99px;width:13.75px;height:38px;background:#f6f6f6;border:1px solid #555;border-bottom:none;box-sizing:border-box"></div><div class="ab" style="left:87.125px;top:135px;width:0;height:0"><div style="position:absolute;left:0;top:0;transform:rotate(-90deg) scaleX(0.8);transform-origin:0 0;white-space:nowrap;font-size:7px;line-height:7px;height:7px;color:#000;font-weight:bold;margin-left:-3.50px">P146</div></div><div class="ab" style="left:95.4px;top:53px;width:13.75px;height:46px;background:#86b0cc"></div><div class="ab" style="left:95.4px;top:95px;width:13.75px;height:42px;background:#e80000"></div><div class="ab" style="left:98.20px;top:98px;width:8.15px;height:36px;background:#f2eeee"></div><div class="ab" style="left:102.275px;top:135px;width:0;height:0"><div style="position:absolute;left:0;top:0;transform:rotate(-90deg) scaleX(0.8);transform-origin:0 0;white-space:nowrap;font-size:7px;line-height:7px;height:7px;color:#000;font-weight:bold;margin-left:-3.50px">P10</div></div><div class="ab" style="left:110.55px;top:53px;width:13.75px;height:46px;background:#ff0000"></div><svg class="ab" style="left:110.55px;top:53px" width="13.75" height="42" viewBox="0 0 13 42"><path d="M0.5 10.5L6.5 1L12.5 10.5Z" fill="#000"/><path d="M6.5 10V31" stroke="#000" stroke-width="1"/><path d="M0.5 31L6.5 40.5L12.5 31Z" fill="#000"/></svg><div class="ab" style="left:117.425px;top:49px;width:0;height:0"><div style="position:absolute;left:0;top:0;transform:rotate(-90deg) scaleX(0.78);transform-origin:0 0;white-space:nowrap;font-size:7px;line-height:7px;height:7px;color:#000;font-weight:bold;margin-left:-3.50px">P11/RxD0</div></div><div class="ab" style="left:110.55px;top:95px;width:13.75px;height:42px;background:#e80000"></div><div class="ab" style="left:113.35px;top:98px;width:8.15px;height:36px;background:#f4f0f0"></div><div class="ab" style="left:117.425px;top:135px;width:0;height:0"><div style="position:absolute;left:0;top:0;transform:rotate(-90deg) scaleX(0.8);transform-origin:0 0;white-space:nowrap;font-size:7px;line-height:7px;height:7px;color:#000;font-weight:bold;margin-left:-3.50px">P11</div></div><div class="ab" style="left:125.7px;top:53px;width:13.75px;height:46px;background:#ff0000"></div><svg class="ab" style="left:125.7px;top:53px" width="13.75" height="42" viewBox="0 0 13 42"><path d="M0.5 10.5L6.5 1L12.5 10.5Z" fill="#000"/><path d="M6.5 10V42" stroke="#000" stroke-width="1"/></svg><div class="ab" style="left:132.575px;top:49px;width:0;height:0"><div style="position:absolute;left:0;top:0;transform:rotate(-90deg) scaleX(0.78);transform-origin:0 0;white-space:nowrap;font-size:7px;line-height:7px;height:7px;color:#000;font-weight:bold;margin-left:-3.50px">P12/TxD0</div></div><div class="ab" style="left:125.7px;top:95px;width:13.75px;height:42px;background:#e80000"></div><div class="ab" style="left:128.50px;top:98px;width:8.15px;height:36px;background:#f4f0f0"></div><div class="ab" style="left:132.575px;top:135px;width:0;height:0"><div style="position:absolute;left:0;top:0;transform:rotate(-90deg) scaleX(0.8);transform-origin:0 0;white-space:nowrap;font-size:7px;line-height:7px;height:7px;color:#000;font-weight:bold;margin-left:-3.50px">P12</div></div><div class="ab" style="left:140.85px;top:53px;width:13.75px;height:46px;background:#86b0cc"></div><div class="ab" style="left:140.85px;top:99px;width:13.75px;height:38px;background:#f6f6f6;border:1px solid #555;border-bottom:none;box-sizing:border-box"></div><div class="ab" style="left:147.725px;top:135px;width:0;height:0"><div style="position:absolute;left:0;top:0;transform:rotate(-90deg) scaleX(0.8);transform-origin:0 0;white-space:nowrap;font-size:7px;line-height:7px;height:7px;color:#000;font-weight:bold;margin-left:-3.50px">P13</div></div><div class="ab" style="left:156.0px;top:53px;width:13.75px;height:46px;background:#86b0cc"></div><div class="ab" style="left:156.0px;top:99px;width:13.75px;height:38px;background:#f6f6f6;border:1px solid #555;border-bottom:none;box-sizing:border-box"></div><div class="ab" style="left:162.875px;top:135px;width:0;height:0"><div style="position:absolute;left:0;top:0;transform:rotate(-90deg) scaleX(0.8);transform-origin:0 0;white-space:nowrap;font-size:7px;line-height:7px;height:7px;color:#000;font-weight:bold;margin-left:-3.50px">P14</div></div><div class="ab" style="left:171.15px;top:53px;width:13.75px;height:46px;background:#86b0cc"></div><div class="ab" style="left:171.15px;top:99px;width:13.75px;height:38px;background:#f6f6f6;border:1px solid #555;border-bottom:none;box-sizing:border-box"></div><div class="ab" style="left:178.025px;top:135px;width:0;height:0"><div style="position:absolute;left:0;top:0;transform:rotate(-90deg) scaleX(0.8);transform-origin:0 0;white-space:nowrap;font-size:7px;line-height:7px;height:7px;color:#000;font-weight:bold;margin-left:-3.50px">P15</div></div><div class="ab" style="left:186.3px;top:53px;width:13.75px;height:46px;background:#86b0cc"></div><div class="ab" style="left:186.3px;top:95px;width:13.75px;height:42px;background:#e80000"></div><div class="ab" style="left:189.10px;top:98px;width:8.15px;height:36px;background:#f4eeee"></div><div class="ab" style="left:193.175px;top:135px;width:0;height:0"><div style="position:absolute;left:0;top:0;transform:rotate(-90deg) scaleX(0.8);transform-origin:0 0;white-space:nowrap;font-size:7px;line-height:7px;height:7px;color:#000;font-weight:bold;margin-left:-3.50px">P16</div></div><div class="ab" style="left:201.45px;top:53px;width:13.75px;height:46px;background:#86b0cc"></div><div class="ab" style="left:201.45px;top:95px;width:13.75px;height:42px;background:#e80000"></div><div class="ab" style="left:204.25px;top:98px;width:8.15px;height:36px;background:#f4eeee"></div><div class="ab" style="left:208.325px;top:135px;width:0;height:0"><div style="position:absolute;left:0;top:0;transform:rotate(-90deg) scaleX(0.8);transform-origin:0 0;white-space:nowrap;font-size:7px;line-height:7px;height:7px;color:#000;font-weight:bold;margin-left:-3.50px">P17</div></div><div class="ab" style="left:216.6px;top:53px;width:13.75px;height:46px;background:#86b0cc"></div><div class="ab" style="left:216.6px;top:95px;width:13.75px;height:42px;background:#e80000"></div><div class="ab" style="left:219.40px;top:98px;width:8.15px;height:36px;background:#f4eeee"></div><div class="ab" style="left:223.475px;top:135px;width:0;height:0"><div style="position:absolute;left:0;top:0;transform:rotate(-90deg) scaleX(0.8);transform-origin:0 0;white-space:nowrap;font-size:7px;line-height:7px;height:7px;color:#000;font-weight:bold;margin-left:-3.50px">P55</div></div><div class="ab" style="left:231.75px;top:53px;width:13.75px;height:46px;background:#86b0cc"></div><div class="ab" style="left:231.75px;top:99px;width:13.75px;height:38px;background:#f6f6f6;border:1px solid #555;border-bottom:none;box-sizing:border-box"></div><div class="ab" style="left:238.625px;top:135px;width:0;height:0"><div style="position:absolute;left:0;top:0;transform:rotate(-90deg) scaleX(0.8);transform-origin:0 0;white-space:nowrap;font-size:7px;line-height:7px;height:7px;color:#000;font-weight:bold;margin-left:-3.50px">P</div></div><div class="ab" style="left:49px;top:137px;width:300px;height:200px;background:#5e5e5e;border-left:1px solid #2a2a2a;border-top:1px solid #2a2a2a;box-sizing:border-box"></div><div class="ab" style="left:65px;top:153px;width:300px;height:200px;background:#4a494e;border-left:1px solid #646464;border-top:1px solid #646464"></div><div class="ab" style="left:72.1px;top:150px;width:0;height:0"><div style="position:absolute;left:0;top:0;transform:rotate(-90deg) scaleX(0.85);transform-origin:0 0;white-space:nowrap;font-size:7px;line-height:7px;height:7px;color:#c8c8c8;font-weight:bold;margin-left:-3.50px">48</div></div><div class="ab" style="left:87.25px;top:150px;width:0;height:0"><div style="position:absolute;left:0;top:0;transform:rotate(-90deg) scaleX(0.85);transform-origin:0 0;white-space:nowrap;font-size:7px;line-height:7px;height:7px;color:#c8c8c8;font-weight:bold;margin-left:-3.50px">47</div></div><div class="ab" style="left:102.4px;top:150px;width:0;height:0"><div style="position:absolute;left:0;top:0;transform:rotate(-90deg) scaleX(0.85);transform-origin:0 0;white-space:nowrap;font-size:7px;line-height:7px;height:7px;color:#c8c8c8;font-weight:bold;margin-left:-3.50px">46</div></div><div class="ab" style="left:117.55px;top:150px;width:0;height:0"><div style="position:absolute;left:0;top:0;transform:rotate(-90deg) scaleX(0.85);transform-origin:0 0;white-space:nowrap;font-size:7px;line-height:7px;height:7px;color:#c8c8c8;font-weight:bold;margin-left:-3.50px">45</div></div><div class="ab" style="left:132.7px;top:150px;width:0;height:0"><div style="position:absolute;left:0;top:0;transform:rotate(-90deg) scaleX(0.85);transform-origin:0 0;white-space:nowrap;font-size:7px;line-height:7px;height:7px;color:#c8c8c8;font-weight:bold;margin-left:-3.50px">44</div></div><div class="ab" style="left:147.85px;top:150px;width:0;height:0"><div style="position:absolute;left:0;top:0;transform:rotate(-90deg) scaleX(0.85);transform-origin:0 0;white-space:nowrap;font-size:7px;line-height:7px;height:7px;color:#c8c8c8;font-weight:bold;margin-left:-3.50px">43</div></div><div class="ab" style="left:163.0px;top:150px;width:0;height:0"><div style="position:absolute;left:0;top:0;transform:rotate(-90deg) scaleX(0.85);transform-origin:0 0;white-space:nowrap;font-size:7px;line-height:7px;height:7px;color:#c8c8c8;font-weight:bold;margin-left:-3.50px">42</div></div><div class="ab" style="left:178.15px;top:150px;width:0;height:0"><div style="position:absolute;left:0;top:0;transform:rotate(-90deg) scaleX(0.85);transform-origin:0 0;white-space:nowrap;font-size:7px;line-height:7px;height:7px;color:#c8c8c8;font-weight:bold;margin-left:-3.50px">41</div></div><div class="ab" style="left:193.3px;top:150px;width:0;height:0"><div style="position:absolute;left:0;top:0;transform:rotate(-90deg) scaleX(0.85);transform-origin:0 0;white-space:nowrap;font-size:7px;line-height:7px;height:7px;color:#c8c8c8;font-weight:bold;margin-left:-3.50px">40</div></div><div class="ab" style="left:208.45px;top:150px;width:0;height:0"><div style="position:absolute;left:0;top:0;transform:rotate(-90deg) scaleX(0.85);transform-origin:0 0;white-space:nowrap;font-size:7px;line-height:7px;height:7px;color:#c8c8c8;font-weight:bold;margin-left:-3.50px">39</div></div><div class="ab" style="left:223.6px;top:150px;width:0;height:0"><div style="position:absolute;left:0;top:0;transform:rotate(-90deg) scaleX(0.85);transform-origin:0 0;white-space:nowrap;font-size:7px;line-height:7px;height:7px;color:#c8c8c8;font-weight:bold;margin-left:-3.50px">38</div></div><div class="ab" style="left:238.75px;top:150px;width:0;height:0"><div style="position:absolute;left:0;top:0;transform:rotate(-90deg) scaleX(0.85);transform-origin:0 0;white-space:nowrap;font-size:7px;line-height:7px;height:7px;color:#c8c8c8;font-weight:bold;margin-left:-3.50px">37</div></div><svg class="ab" style="left:108px;top:224px" width="140" height="34" viewBox="0 0 140 34"><rect x="6" y="18" width="7" height="7" fill="#d4d4d4"/><path d="M5 10.8C9 8 14 6.8 20 7C25 7.3 28.2 9.5 27.8 12.8C27.4 15.6 24.5 17.2 21.2 18.3C24.5 22 28.5 26 33.8 29.8C28.5 28.8 22.5 24.2 16 18.2C20.5 17.2 23.4 15.5 23.5 12.8C23.6 10.2 20 9 14.5 9.2C11 9.4 8 10 5 10.8Z" fill="#d4d4d4"/><text x="30.5" y="25.6" font-size="20.6" font-family="Liberation Sans" fill="#d4d4d4" stroke="#d4d4d4" stroke-width="1.1" textLength="121" lengthAdjust="spacingAndGlyphs">ENESAS</text></svg><div class="ab" style="left:0;top:153px;width:11px;height:14px;background:#86b0cc"></div><div class="ab" style="left:11px;top:153px;width:38px;height:14px;background:#f4f4f4;border:1px solid #444;border-right:none;border-bottom-width:2px;box-sizing:border-box"></div><div class="ab" style="left:14px;top:155px;font-size:7.5px;line-height:10px;-webkit-text-stroke:.2px currentColor;transform:scaleX(.85);transform-origin:0 0;color:#111">P27</div><div class="ab" style="left:52px;top:155px;font-size:7.5px;line-height:10px;font-weight:bold;transform:scaleX(.9);transform-origin:0 0;color:#c4c4c4">49</div><div class="ab" style="left:0;top:168px;width:11px;height:14px;background:#86b0cc"></div><div class="ab" style="left:11px;top:168px;width:38px;height:14px;background:#f4f4f4;border:1px solid #444;border-right:none;border-bottom-width:2px;box-sizing:border-box"></div><div class="ab" style="left:14px;top:170px;font-size:7.5px;line-height:10px;-webkit-text-stroke:.2px currentColor;transform:scaleX(.85);transform-origin:0 0;color:#111">P26</div><div class="ab" style="left:52px;top:170px;font-size:7.5px;line-height:10px;font-weight:bold;transform:scaleX(.9);transform-origin:0 0;color:#c4c4c4">50</div><div class="ab" style="left:0;top:183px;width:11px;height:14px;background:#86b0cc"></div><div class="ab" style="left:11px;top:183px;width:38px;height:14px;background:#f4f4f4;border:1px solid #444;border-right:none;border-bottom-width:2px;box-sizing:border-box"></div><div class="ab" style="left:14px;top:185px;font-size:7.5px;line-height:10px;-webkit-text-stroke:.2px currentColor;transform:scaleX(.85);transform-origin:0 0;color:#111">P25</div><div class="ab" style="left:52px;top:185px;font-size:7.5px;line-height:10px;font-weight:bold;transform:scaleX(.9);transform-origin:0 0;color:#c4c4c4">51</div><div class="ab" style="left:0;top:198px;width:11px;height:14px;background:#86b0cc"></div><div class="ab" style="left:11px;top:198px;width:38px;height:14px;background:#f4f4f4;border:1px solid #444;border-right:none;border-bottom-width:2px;box-sizing:border-box"></div><div class="ab" style="left:14px;top:200px;font-size:7.5px;line-height:10px;-webkit-text-stroke:.2px currentColor;transform:scaleX(.85);transform-origin:0 0;color:#111">P24</div><div class="ab" style="left:52px;top:200px;font-size:7.5px;line-height:10px;font-weight:bold;transform:scaleX(.9);transform-origin:0 0;color:#c4c4c4">52</div><div class="ab" style="left:0;top:214px;width:11px;height:14px;background:#86e086"></div><svg class="ab" style="left:0;top:217px" width="7" height="9"><path d="M0 0L6 4.5L0 9Z" fill="#000"/></svg><div class="ab" style="left:11px;top:214px;width:38px;height:14px;background:#ff30ff;border:1px solid #444;border-right:none;border-bottom-width:2px;box-sizing:border-box"></div><div class="ab" style="left:14px;top:216px;font-size:7.5px;line-height:10px;-webkit-text-stroke:.2px currentColor;transform:scaleX(.85);transform-origin:0 0;color:#8a008a">P23</div><div class="ab" style="left:52px;top:216px;font-size:7.5px;line-height:10px;font-weight:bold;transform:scaleX(.9);transform-origin:0 0;color:#c4c4c4">53</div><div class="ab" style="left:0;top:229px;width:11px;height:14px;background:#86e086"></div><svg class="ab" style="left:0;top:232px" width="7" height="9"><path d="M0 0L6 4.5L0 9Z" fill="#000"/></svg><div class="ab" style="left:11px;top:229px;width:38px;height:14px;background:#ff30ff;border:1px solid #444;border-right:none;border-bottom-width:2px;box-sizing:border-box"></div><div class="ab" style="left:14px;top:231px;font-size:7.5px;line-height:10px;-webkit-text-stroke:.2px currentColor;transform:scaleX(.85);transform-origin:0 0;color:#8a008a">P22</div><div class="ab" style="left:52px;top:231px;font-size:7.5px;line-height:10px;font-weight:bold;transform:scaleX(.9);transform-origin:0 0;color:#c4c4c4">54</div><div class="ab" style="left:0;top:244px;width:11px;height:14px;background:#86e086"></div><svg class="ab" style="left:0;top:247px" width="7" height="9"><path d="M0 0L6 4.5L0 9Z" fill="#000"/></svg><div class="ab" style="left:11px;top:244px;width:38px;height:14px;background:#ff30ff;border:1px solid #444;border-right:none;border-bottom-width:2px;box-sizing:border-box"></div><div class="ab" style="left:14px;top:246px;font-size:7.5px;line-height:10px;-webkit-text-stroke:.2px currentColor;transform:scaleX(.85);transform-origin:0 0;color:#8a008a">P21</div><div class="ab" style="left:52px;top:246px;font-size:7.5px;line-height:10px;font-weight:bold;transform:scaleX(.9);transform-origin:0 0;color:#c4c4c4">55</div><div class="ab" style="left:0;top:259px;width:11px;height:14px;background:#86e086"></div><svg class="ab" style="left:0;top:262px" width="7" height="9"><path d="M0 0L6 4.5L0 9Z" fill="#000"/></svg><div class="ab" style="left:11px;top:259px;width:38px;height:14px;background:#ff30ff;border:1px solid #444;border-right:none;border-bottom-width:2px;box-sizing:border-box"></div><div class="ab" style="left:14px;top:261px;font-size:7.5px;line-height:10px;-webkit-text-stroke:.2px currentColor;transform:scaleX(.85);transform-origin:0 0;color:#8a008a">P20</div><div class="ab" style="left:52px;top:261px;font-size:7.5px;line-height:10px;font-weight:bold;transform:scaleX(.9);transform-origin:0 0;color:#c4c4c4">56</div><div class="ab" style="left:0;top:274px;width:11px;height:14px;background:#86b0cc"></div><div class="ab" style="left:11px;top:274px;width:38px;height:14px;background:#f4f4f4;border:1px solid #444;border-right:none;border-bottom-width:2px;box-sizing:border-box"></div><div class="ab" style="left:14px;top:276px;font-size:7.5px;line-height:10px;-webkit-text-stroke:.2px currentColor;transform:scaleX(.85);transform-origin:0 0;color:#111">P130</div><div class="ab" style="left:52px;top:276px;font-size:7.5px;line-height:10px;font-weight:bold;transform:scaleX(.9);transform-origin:0 0;color:#c4c4c4">57</div><div class="ab" style="left:0;top:289px;width:11px;height:14px;background:#86b0cc"></div><div class="ab" style="left:11px;top:289px;width:38px;height:14px;background:#f4f4f4;border:1px solid #444;border-right:none;border-bottom-width:2px;box-sizing:border-box"></div><div class="ab" style="left:14px;top:291px;font-size:7.5px;line-height:10px;-webkit-text-stroke:.2px currentColor;transform:scaleX(.85);transform-origin:0 0;color:#111">P04</div><div class="ab" style="left:52px;top:291px;font-size:7.5px;line-height:10px;font-weight:bold;transform:scaleX(.9);transform-origin:0 0;color:#c4c4c4">58</div></div><div class="ab" style="left:1011px;top:333px;width:236px;height:15px;background:#f6f6f6;border-top:1px solid #d8d8d8;box-sizing:border-box"></div><svg class="ab" style="left:1017px;top:339px" width="5" height="6"><path d="M5 0L0 3L5 6Z" fill="#888"/></svg><div class="ab" style="left:1087px;top:334px;width:170px;height:13px;background:linear-gradient(#f4f4f4,#e2e2e2);border:1px solid #c8c8c8;border-radius:2px;box-sizing:border-box"></div><div class="ab" style="left:1011px;top:348px;width:236px;height:3px;background:#e4e4e4"></div><div class="ab" style="left:1011px;top:351px;width:236px;height:23px;background:linear-gradient(#f6f6f6,#e8e8e8);border-top:1px solid #d4d4d4;box-sizing:border-box"></div><svg class="ab" style="left:1021px;top:359px" width="6" height="8"><path d="M0 0L5.5 4L0 8Z" fill="#555"/></svg><div class="ab" style="left:1035px;top:356px;color:#333;font-size:12px;white-space:nowrap">Legend</div></div><svg class="ab" style="left:485px;top:382px" width="60" height="44" viewBox="0 0 60 44"><path d="M14.4 0.9H44.9V19.3H56.8L58.2 21.3L29.6 42.8L0.8 21.3L2.2 19.3H14.4Z" fill="#3f48cc"/></svg><div class="ab" style="left:555px;top:387px;width:35px;height:29px;background:linear-gradient(135deg,#e2e8f0,#f6f8fb)"></div><svg class="ab" style="left:565px;top:392px" width="18" height="23" viewBox="0 0 16 16" preserveAspectRatio="none"><g fill="#0d6418" stroke="#7ad87a" stroke-width=".5" stroke-opacity=".5"><path d="M0.4 10C0.2 5.5 3 2.6 7 2.8L8.8 5.5L7.2 8.4C4.6 7.6 2.9 8.4 2.1 10.4Z"/><path d="M9.3 0C13.5 1 16 5 15.2 10L12.6 12.2L10.2 10C11.6 6.5 11.4 3.5 9.3 0Z"/><path d="M3.8 12.6L6.9 10.3C7.8 12.6 9.5 14 12.6 15.2C8.5 17.2 5.2 15.6 3.8 12.6Z"/></g></svg><div class="ab" style="left:596px;top:392px;font-size:22px;font-weight:bold;color:#7f7f7f;white-space:nowrap;transform:scaleX(1.06);transform-origin:0 0">Press the button</div><div class="panel" style="left:1px;top:433px"><div class="ab hdr"></div><div class="ab title">Pin configuration</div><div class="ab link" style="left:814px;top:20px">Generate Code</div><div class="ab link" style="left:903.5px;top:20px">Generate Report</div><svg class="ab" style="left:846px;top:2px" width="16" height="16" viewBox="0 0 16 16"><rect x="3.5" y="0.5" width="11" height="15" fill="#eef2f8" stroke="#7080a8"/><path d="M14.5 1v15M4 15.5h11" stroke="#4a5a80"/><path d="M6.5 2.5h7" stroke="#2a3a80" stroke-dasharray="1 1"/><text x="0" y="8" font-size="8.5" font-family="Liberation Sans" fill="#1e2a78" font-weight="bold">C</text><circle cx="8" cy="11.2" r="4.3" fill="#fff" stroke="#5a6a8a"/><path d="M6.6 8.8L10.6 11.2L6.6 13.6Z" fill="#3a9a2a"/></svg><svg class="ab" style="left:938px;top:2px" width="16" height="16" viewBox="0 0 16 16"><path d="M4.5 0.5h5l2 2v6h-7z" fill="#fff" stroke="#8090a8"/><path d="M6 4h4M6 6h4" stroke="#6a7aa0"/><rect x="0.5" y="7.5" width="15" height="7" rx="2" fill="#b8cae2" stroke="#7088aa"/><rect x="1" y="11.5" width="14" height="3.5" rx="1" fill="#8ea6c6"/></svg><div class="ab" style="left:0;top:39px;width:999px;height:1px;background:#f2f6f8"></div><div class="ab" style="left:0;top:40px;width:999px;height:1px;background:#bfc5ca"></div><div class="ab" style="left:0;top:41px;width:999px;height:1px;background:#e2e6e9"></div><div class="ab" style="left:0;top:41px;width:999px;height:290px;background:#fff"></div><div class="ab" style="left:1px;top:41px;width:1px;height:315px;background:#d4d4d4"></div><div class="ab" style="left:998px;top:41px;width:1px;height:290px;background:#ececec"></div><div class="ab sec" style="left:10px;width:267px"></div><div class="ab sec" style="left:280px;width:712px"></div><div class="ab sect" style="left:16px;top:57px;transform:scaleX(.97)">Hardware Resource</div><div class="ab sect" style="left:286px;top:57px;transform:scaleX(.93)">Pin Function</div><svg class="ab" style="left:184px;top:58px" width="13" height="13" viewBox="0 0 13 13"><rect x="0.5" y="0.5" width="9" height="9" fill="#f4f8fb" stroke="#b4c0c8"/><rect x="2.5" y="2.5" width="10" height="10" fill="#f0f6fa" stroke="#7a8894"/><path d="M4.5 7.5h6M7.5 4.5v6" stroke="#1a2a3a" stroke-width="1.3"/></svg><svg class="ab" style="left:207px;top:58px" width="13" height="13" viewBox="0 0 13 13"><rect x="0.5" y="0.5" width="9" height="9" fill="#f4f8fb" stroke="#b4c0c8"/><rect x="2.5" y="2.5" width="10" height="10" fill="#f0f6fa" stroke="#7a8894"/><path d="M4.5 7.5h6" stroke="#1a2a3a" stroke-width="1.3"/></svg><svg class="ab" style="left:228px;top:56px" width="17" height="17" viewBox="0 0 17 17"><path d="M2.5 2v12M0.5 11.5l2 3l2-3" stroke="#444" fill="none"/><text x="5" y="7.5" font-size="10" font-weight="bold" font-family="Liberation Sans" fill="#2a8a7a">a</text><text x="8.5" y="16.5" font-size="11" font-weight="bold" font-family="Liberation Sans" fill="#8a2a7a">z</text></svg><svg class="ab" style="left:251px;top:56px" width="16" height="15" viewBox="0 0 16 15"><rect x="5.5" y="0.5" width="5" height="4" fill="#e8dcc0" stroke="#9a8a6a"/><path d="M8 4.5v3M2.5 7.5h11M2.5 7.5v2M8 7.5v2M13.5 7.5v2" stroke="#3a8a9a"/><rect x="0.5" y="9.5" width="4" height="4.5" fill="#5ac0d8" stroke="#2a8aa8"/><rect x="6" y="9.5" width="4" height="4.5" fill="#5ac0d8" stroke="#2a8aa8"/><rect x="11.5" y="9.5" width="4" height="4.5" fill="#5ac0d8" stroke="#2a8aa8"/></svg><svg class="ab" style="left:850px;top:56px" width="15" height="16" viewBox="0 0 16 16" preserveAspectRatio="none"><g fill="#0d6418" stroke="#7ad87a" stroke-width=".5" stroke-opacity=".5"><path d="M0.4 10C0.2 5.5 3 2.6 7 2.8L8.8 5.5L7.2 8.4C4.6 7.6 2.9 8.4 2.1 10.4Z"/><path d="M9.3 0C13.5 1 16 5 15.2 10L12.6 12.2L10.2 10C11.6 6.5 11.4 3.5 9.3 0Z"/><path d="M3.8 12.6L6.9 10.3C7.8 12.6 9.5 14 12.6 15.2C8.5 17.2 5.2 15.6 3.8 12.6Z"/></g></svg><div class="ab" style="left:872px;top:55px;width:1px;height:18px;background:#8a8a8a"></div><div class="ab" style="left:903px;top:55px;width:1px;height:18px;background:#8a8a8a"></div><div class="ab" style="left:934px;top:55px;width:1px;height:18px;background:#8a8a8a"></div><div class="ab" style="left:881px;top:56px;width:16px;height:16px;background:#9c9c9c"><div class="ab" style="left:5px;top:4px;width:2px;height:3px;background:#e0e0e0"></div><div class="ab" style="left:9px;top:3px;width:2px;height:4px;background:#e0e0e0"></div><div class="ab" style="left:8px;top:10px;width:3px;height:2px;background:#e0e0e0"></div></div><svg class="ab" style="left:912px;top:56px" width="16" height="16" viewBox="0 0 16 16"><rect x="0.5" y="0.5" width="13" height="13" fill="#e4f0dc" stroke="#5a8a6a"/><path d="M0.5 4.5h13M0.5 8.5h13M4.5 0.5v13" stroke="#6a9a7a"/><rect x="6.5" y="7" width="9.5" height="9" fill="#4848a8"/><rect x="8.5" y="8" width="5.5" height="3" fill="#f0f0f0"/><rect x="10" y="13" width="3" height="3" fill="#d0d0e0"/></svg><svg class="ab" style="left:942px;top:57px" width="17" height="14" viewBox="0 0 17 14"><path d="M1 6v7h15V6h-3v4H4V6z" fill="#b8c8dc" stroke="#5a7090"/><path d="M4 1l5.5 5.5M9.5 3v3.5H6" stroke="#2a4060" fill="none" stroke-width="1.3"/></svg><svg class="ab" style="left:965px;top:57px" width="17" height="14" viewBox="0 0 17 14"><path d="M1 6v7h15V6h-3v4H4V6z" fill="#b8c8dc" stroke="#5a7090"/><path d="M7.5 7.5L14 1M10.5 1H14v3.5" stroke="#2a4060" fill="none" stroke-width="1.3"/></svg><div class="ab inp" style="left:21px;top:86px;width:243px;height:19px"><span class="ph" style="left:5px;transform:scaleX(.96)">Type filter text</span></div><div class="ab inp" style="left:291px;top:86px;width:565px;height:19px"><span class="ph" style="transform:scaleX(.99)">type filter text (* = any string, ? = any character)</span></div><div class="ab combo" style="left:865px;top:86px;width:114px;height:21px"><span style="position:absolute;left:3px;top:4px">All</span><svg class="ab" style="left:102px;top:9px" width="10" height="6"><path d="M0.5 0.5l4 4l4-4" stroke="#333" fill="none"/></svg></div><div class="ab tree" style="left:21px;top:112px;width:243px;height:207px"><svg class="ab" style="left:22px;top:6px" width="10" height="7"><path d="M1 1l4 4l4-4" stroke="#333" stroke-width="1.6" fill="none"/></svg><div class="ab tt" style="left:56px;top:2px;transform:scaleX(0.87);">SAU0</div><div class="ab" style="left:0;top:18px;width:226px;height:18px;background:#d9d9d9"></div><svg class="ab" style="left:51px;top:19px" width="16" height="16" viewBox="0 0 16 16"><path d="M1 7L7 5L13 7L13 13L7 15.5L1 13Z" fill="#2d94e2"/><path d="M7 9L13 7L13 13L7 15.5Z" fill="#6cc8f2"/><path d="M1 7L7 9L7 15.5L1 13Z" fill="#2d94e2"/><path d="M7 5L10 1L15 3L13 7Z" fill="#c8f0fc" stroke="#3a8ac8" stroke-width=".8"/></svg><div class="ab tt" style="left:72px;top:20px;transform:scaleX(0.87);">SAU00</div><svg class="ab" style="left:52px;top:40px" width="12" height="11" viewBox="0 0 12 11"><path d="M0.5 3L6 1L11.5 3L11.5 8.5L6 10.5L0.5 8.5Z" fill="#2d94e2"/><path d="M0.5 3L6 1L11.5 3L6 5Z" fill="#b5ecfb"/><path d="M6 5L11.5 3L11.5 8.5L6 10.5Z" fill="#6cc8f2"/></svg><div class="ab tt" style="left:72px;top:38px;transform:scaleX(0.87);">SAU01</div><svg class="ab" style="left:52px;top:58px" width="12" height="11" viewBox="0 0 12 11"><path d="M0.5 3L6 1L11.5 3L11.5 8.5L6 10.5L0.5 8.5Z" fill="#2d94e2"/><path d="M0.5 3L6 1L11.5 3L6 5Z" fill="#b5ecfb"/><path d="M6 5L11.5 3L11.5 8.5L6 10.5Z" fill="#6cc8f2"/></svg><div class="ab tt" style="left:72px;top:56px;transform:scaleX(0.87);">SAU02</div><svg class="ab" style="left:52px;top:76px" width="12" height="11" viewBox="0 0 12 11"><path d="M0.5 3L6 1L11.5 3L11.5 8.5L6 10.5L0.5 8.5Z" fill="#2d94e2"/><path d="M0.5 3L6 1L11.5 3L6 5Z" fill="#b5ecfb"/><path d="M6 5L11.5 3L11.5 8.5L6 10.5Z" fill="#6cc8f2"/></svg><div class="ab tt" style="left:72px;top:74px;transform:scaleX(0.87);">SAU03</div><svg class="ab" style="left:22px;top:96px" width="10" height="7"><path d="M1 1l4 4l4-4" stroke="#333" stroke-width="1.6" fill="none"/></svg><div class="ab tt" style="left:56px;top:92px;transform:scaleX(0.87);">SAU1</div><svg class="ab" style="left:52px;top:112px" width="12" height="11" viewBox="0 0 12 11"><path d="M0.5 3L6 1L11.5 3L11.5 8.5L6 10.5L0.5 8.5Z" fill="#2d94e2"/><path d="M0.5 3L6 1L11.5 3L6 5Z" fill="#b5ecfb"/><path d="M6 5L11.5 3L11.5 8.5L6 10.5Z" fill="#6cc8f2"/></svg><div class="ab tt" style="left:72px;top:110px;transform:scaleX(0.87);">SAU10</div><svg class="ab" style="left:52px;top:130px" width="12" height="11" viewBox="0 0 12 11"><path d="M0.5 3L6 1L11.5 3L11.5 8.5L6 10.5L0.5 8.5Z" fill="#2d94e2"/><path d="M0.5 3L6 1L11.5 3L6 5Z" fill="#b5ecfb"/><path d="M6 5L11.5 3L11.5 8.5L6 10.5Z" fill="#6cc8f2"/></svg><div class="ab tt" style="left:72px;top:128px;transform:scaleX(0.87);">SAU11</div><svg class="ab" style="left:5px;top:150px" width="10" height="7"><path d="M1 1l4 4l4-4" stroke="#333" stroke-width="1.6" fill="none"/></svg><svg class="ab" style="left:19px;top:145px" width="17" height="17" viewBox="0 0 17 17"><circle cx="3.2" cy="7.5" r="2.4" fill="#9a9a9a" stroke="#3a3a3a" stroke-width="1.1" stroke-dasharray=".9 .7"/><path d="M5.5 7.5h1.5M8.5 4.5h1M8.5 12.5h1" stroke="#1a2a7a" stroke-width="1.1"/><path d="M7.5 1.2v15.6" stroke="#1a2a7a" stroke-width="1.4"/><circle cx="12" cy="4.5" r="2.6" fill="#a0a0a0" stroke="#3a3a3a" stroke-width="1.1" stroke-dasharray=".9 .7"/><circle cx="12" cy="12.5" r="2.6" fill="#a0a0a0" stroke="#3a3a3a" stroke-width="1.1" stroke-dasharray=".9 .7"/></svg><div class="ab tt" style="left:40px;top:146px;transform:scaleX(0.943);">Serial Interface&nbsp; IICA</div><svg class="ab" style="left:36px;top:166px" width="12" height="11" viewBox="0 0 12 11"><path d="M0.5 3L6 1L11.5 3L11.5 8.5L6 10.5L0.5 8.5Z" fill="#2d94e2"/><path d="M0.5 3L6 1L11.5 3L6 5Z" fill="#b5ecfb"/><path d="M6 5L11.5 3L11.5 8.5L6 10.5Z" fill="#6cc8f2"/></svg><div class="ab tt" style="left:56px;top:164px;transform:scaleX(0.87);">IICA0</div><svg class="ab" style="left:36px;top:184px" width="12" height="11" viewBox="0 0 12 11"><path d="M0.5 3L6 1L11.5 3L11.5 8.5L6 10.5L0.5 8.5Z" fill="#2d94e2"/><path d="M0.5 3L6 1L11.5 3L6 5Z" fill="#b5ecfb"/><path d="M6 5L11.5 3L11.5 8.5L6 10.5Z" fill="#6cc8f2"/></svg><div class="ab tt" style="left:56px;top:182px;transform:scaleX(0.87);">IICA1</div><div class="ab" style="left:227px;top:0;width:16px;height:191px;background:#f0f0f0"></div><svg class="ab" style="left:230px;top:6px" width="10" height="7"><path d="M1 6l4-4l4 4" stroke="#555" stroke-width="1.8" fill="none"/></svg><div class="ab" style="left:227px;top:100px;width:15px;height:33px;background:#cdcdcd"></div><svg class="ab" style="left:230px;top:178px" width="10" height="7"><path d="M1 1l4 4l4-4" stroke="#555" stroke-width="2" fill="none"/></svg><div class="ab" style="left:0;top:191px;width:243px;height:16px;background:#f0f0f0"></div><svg class="ab" style="left:5px;top:194px" width="7" height="10"><path d="M6 1l-4 4l4 4" stroke="#555" stroke-width="1.8" fill="none"/></svg><div class="ab" style="left:18px;top:191px;width:173px;height:16px;background:#cdcdcd"></div><svg class="ab" style="left:215px;top:194px" width="7" height="10"><path d="M1 1l4 4l-4 4" stroke="#555" stroke-width="1.8" fill="none"/></svg></div><div class="ab tbl" style="left:291px;top:114px;width:688px;height:205px"><div class="ab tt" style="left:6px;top:5px;transform:scaleX(0.95);">Enabled</div><div class="ab tt" style="left:66.5px;top:5px;transform:scaleX(0.97);">Function</div><div class="ab tt" style="left:166.5px;top:5px;transform:scaleX(0.9);">PIOR</div><div class="ab tt" style="left:266.5px;top:5px;transform:scaleX(1.0);">Assignment</div><div class="ab tt" style="left:566.5px;top:5px;transform:scaleX(0.99);">Pin Number</div><div class="ab tt" style="left:666.5px;top:5px;transform:scaleX(0.95);">Dire</div><div class="ab" style="left:59px;top:0;width:1px;height:189px;background:#e4e4e4"></div><div class="ab" style="left:159px;top:0;width:1px;height:189px;background:#e4e4e4"></div><div class="ab" style="left:259px;top:0;width:1px;height:189px;background:#e4e4e4"></div><div class="ab" style="left:559px;top:0;width:1px;height:189px;background:#e4e4e4"></div><div class="ab" style="left:659px;top:0;width:1px;height:189px;background:#e4e4e4"></div><div class="ab" style="left:0;top:41px;width:688px;height:1px;background:#e6e6e6"></div><div class="ab" style="left:0;top:59px;width:688px;height:1px;background:#e6e6e6"></div><div class="ab" style="left:0;top:77px;width:688px;height:1px;background:#e6e6e6"></div><div class="ab" style="left:0;top:95px;width:688px;height:1px;background:#e6e6e6"></div><div class="ab" style="left:0;top:113px;width:688px;height:1px;background:#e6e6e6"></div><div class="ab" style="left:0;top:131px;width:688px;height:1px;background:#e6e6e6"></div><div class="ab" style="left:0;top:149px;width:688px;height:1px;background:#e6e6e6"></div><div class="ab" style="left:0;top:167px;width:688px;height:1px;background:#e6e6e6"></div><div class="ab" style="left:0;top:185px;width:688px;height:1px;background:#e6e6e6"></div><div class="ab" style="left:0;top:24px;width:688px;height:17px;background:#d9d9d9"></div><div class="ab cb" style="left:21px;top:27px"><svg width="13" height="13" style="position:absolute;left:-1px;top:-1px;display:block"><path d="M3 6.5l2.6 2.6l4.9-5.4" stroke="#2a2a2a" stroke-width="1.2" fill="none"/></svg></div><div class="ab tt" style="left:63px;top:26px;transform:scaleX(0.87);color:#000">RxD0</div><div class="ab tt" style="left:165px;top:26px;transform:scaleX(0.83);color:#000">PIOR1</div><svg class="ab" style="left:265px;top:28px" width="7" height="9" viewBox="0 0 7 9"><path d="M3.3 0.3L6.6 0.6L3.6 7.3L0.9 8.3Z" fill="#c9aa84"/><path d="M6.6 0.6L3.6 7.3" stroke="#8a6a48" stroke-width=".9"/><path d="M3.3 0.3L0.9 8.3" stroke="#a88860" stroke-width=".6"/><circle cx="1.3" cy="7.8" r="1" fill="#111"/></svg><div class="ab tt" style="left:279px;top:26px;transform:scaleX(0.945);width:295.2px;overflow:hidden;color:#000">P16/EO16/CCD00/TI01/TO01/INTP5/SI00/RxD0</div><svg class="ab" style="left:565px;top:28px" width="7" height="9" viewBox="0 0 7 9"><path d="M3.3 0.3L6.6 0.6L3.6 7.3L0.9 8.3Z" fill="#c9aa84"/><path d="M6.6 0.6L3.6 7.3" stroke="#8a6a48" stroke-width=".9"/><path d="M3.3 0.3L0.9 8.3" stroke="#a88860" stroke-width=".6"/><circle cx="1.3" cy="7.8" r="1" fill="#111"/></svg><div class="ab tt" style="left:579px;top:26px;transform:scaleX(0.9);color:#000">40</div><div class="ab tt" style="left:666px;top:26px;transform:scaleX(0.95);width:23.2px;overflow:hidden;color:#000">I</div><div class="ab cb" style="left:21px;top:45px"></div><div class="ab tt" style="left:63px;top:44px;transform:scaleX(0.87);color:#000">SCK00</div><div class="ab tt" style="left:165px;top:44px;transform:scaleX(0.83);color:#000">PIOR1</div><svg class="ab" style="left:265px;top:46px" width="7" height="9" viewBox="0 0 7 9"><path d="M3.3 0.3L6.6 0.6L3.6 7.3L0.9 8.3Z" fill="#c9aa84"/><path d="M6.6 0.6L3.6 7.3" stroke="#8a6a48" stroke-width=".9"/><path d="M3.3 0.3L0.9 8.3" stroke="#a88860" stroke-width=".6"/><circle cx="1.3" cy="7.8" r="1" fill="#111"/></svg><div class="ab tt" style="left:279px;top:44px;transform:scaleX(0.98);width:284.7px;overflow:hidden;color:#000">Not assigned</div><svg class="ab" style="left:565px;top:46px" width="7" height="9" viewBox="0 0 7 9"><path d="M3.3 0.3L6.6 0.6L3.6 7.3L0.9 8.3Z" fill="#c9aa84"/><path d="M6.6 0.6L3.6 7.3" stroke="#8a6a48" stroke-width=".9"/><path d="M3.3 0.3L0.9 8.3" stroke="#a88860" stroke-width=".6"/><circle cx="1.3" cy="7.8" r="1" fill="#111"/></svg><div class="ab tt" style="left:579px;top:44px;transform:scaleX(0.98);color:#000">Not assigned</div><div class="ab tt" style="left:666px;top:44px;transform:scaleX(0.95);width:23.2px;overflow:hidden;color:#000">None</div><div class="ab cb" style="left:21px;top:63px"></div><div class="ab tt" style="left:63px;top:62px;transform:scaleX(0.87);color:#000">SCL00</div><div class="ab tt" style="left:165px;top:62px;transform:scaleX(0.83);color:#000">PIOR1</div><svg class="ab" style="left:265px;top:64px" width="7" height="9" viewBox="0 0 7 9"><path d="M3.3 0.3L6.6 0.6L3.6 7.3L0.9 8.3Z" fill="#c9aa84"/><path d="M6.6 0.6L3.6 7.3" stroke="#8a6a48" stroke-width=".9"/><path d="M3.3 0.3L0.9 8.3" stroke="#a88860" stroke-width=".6"/><circle cx="1.3" cy="7.8" r="1" fill="#111"/></svg><div class="ab tt" style="left:279px;top:62px;transform:scaleX(0.98);width:284.7px;overflow:hidden;color:#000">Not assigned</div><svg class="ab" style="left:565px;top:64px" width="7" height="9" viewBox="0 0 7 9"><path d="M3.3 0.3L6.6 0.6L3.6 7.3L0.9 8.3Z" fill="#c9aa84"/><path d="M6.6 0.6L3.6 7.3" stroke="#8a6a48" stroke-width=".9"/><path d="M3.3 0.3L0.9 8.3" stroke="#a88860" stroke-width=".6"/><circle cx="1.3" cy="7.8" r="1" fill="#111"/></svg><div class="ab tt" style="left:579px;top:62px;transform:scaleX(0.98);color:#000">Not assigned</div><div class="ab tt" style="left:666px;top:62px;transform:scaleX(0.95);width:23.2px;overflow:hidden;color:#000">None</div><div class="ab cb" style="left:21px;top:81px"></div><div class="ab tt" style="left:63px;top:80px;transform:scaleX(0.87);color:#000">SDA00</div><div class="ab tt" style="left:165px;top:80px;transform:scaleX(0.83);color:#000">PIOR1</div><svg class="ab" style="left:265px;top:82px" width="7" height="9" viewBox="0 0 7 9"><path d="M3.3 0.3L6.6 0.6L3.6 7.3L0.9 8.3Z" fill="#c9aa84"/><path d="M6.6 0.6L3.6 7.3" stroke="#8a6a48" stroke-width=".9"/><path d="M3.3 0.3L0.9 8.3" stroke="#a88860" stroke-width=".6"/><circle cx="1.3" cy="7.8" r="1" fill="#111"/></svg><div class="ab tt" style="left:279px;top:80px;transform:scaleX(0.98);width:284.7px;overflow:hidden;color:#000">Not assigned</div><svg class="ab" style="left:565px;top:82px" width="7" height="9" viewBox="0 0 7 9"><path d="M3.3 0.3L6.6 0.6L3.6 7.3L0.9 8.3Z" fill="#c9aa84"/><path d="M6.6 0.6L3.6 7.3" stroke="#8a6a48" stroke-width=".9"/><path d="M3.3 0.3L0.9 8.3" stroke="#a88860" stroke-width=".6"/><circle cx="1.3" cy="7.8" r="1" fill="#111"/></svg><div class="ab tt" style="left:579px;top:80px;transform:scaleX(0.98);color:#000">Not assigned</div><div class="ab tt" style="left:666px;top:80px;transform:scaleX(0.95);width:23.2px;overflow:hidden;color:#000">None</div><div class="ab cb" style="left:21px;top:99px"></div><div class="ab tt" style="left:63px;top:98px;transform:scaleX(0.87);color:#000">SI00</div><div class="ab tt" style="left:165px;top:98px;transform:scaleX(0.83);color:#000">PIOR1</div><svg class="ab" style="left:265px;top:100px" width="7" height="9" viewBox="0 0 7 9"><path d="M3.3 0.3L6.6 0.6L3.6 7.3L0.9 8.3Z" fill="#c9aa84"/><path d="M6.6 0.6L3.6 7.3" stroke="#8a6a48" stroke-width=".9"/><path d="M3.3 0.3L0.9 8.3" stroke="#a88860" stroke-width=".6"/><circle cx="1.3" cy="7.8" r="1" fill="#111"/></svg><div class="ab tt" style="left:279px;top:98px;transform:scaleX(0.98);width:284.7px;overflow:hidden;color:#000">Not assigned</div><svg class="ab" style="left:565px;top:100px" width="7" height="9" viewBox="0 0 7 9"><path d="M3.3 0.3L6.6 0.6L3.6 7.3L0.9 8.3Z" fill="#c9aa84"/><path d="M6.6 0.6L3.6 7.3" stroke="#8a6a48" stroke-width=".9"/><path d="M3.3 0.3L0.9 8.3" stroke="#a88860" stroke-width=".6"/><circle cx="1.3" cy="7.8" r="1" fill="#111"/></svg><div class="ab tt" style="left:579px;top:98px;transform:scaleX(0.98);color:#000">Not assigned</div><div class="ab tt" style="left:666px;top:98px;transform:scaleX(0.95);width:23.2px;overflow:hidden;color:#000">None</div><div class="ab cb" style="left:21px;top:117px"></div><div class="ab tt" style="left:63px;top:116px;transform:scaleX(0.87);color:#000">SO00</div><div class="ab tt" style="left:165px;top:116px;transform:scaleX(0.83);color:#000">PIOR1</div><svg class="ab" style="left:265px;top:118px" width="7" height="9" viewBox="0 0 7 9"><path d="M3.3 0.3L6.6 0.6L3.6 7.3L0.9 8.3Z" fill="#c9aa84"/><path d="M6.6 0.6L3.6 7.3" stroke="#8a6a48" stroke-width=".9"/><path d="M3.3 0.3L0.9 8.3" stroke="#a88860" stroke-width=".6"/><circle cx="1.3" cy="7.8" r="1" fill="#111"/></svg><div class="ab tt" style="left:279px;top:116px;transform:scaleX(0.98);width:284.7px;overflow:hidden;color:#000">Not assigned</div><svg class="ab" style="left:565px;top:118px" width="7" height="9" viewBox="0 0 7 9"><path d="M3.3 0.3L6.6 0.6L3.6 7.3L0.9 8.3Z" fill="#c9aa84"/><path d="M6.6 0.6L3.6 7.3" stroke="#8a6a48" stroke-width=".9"/><path d="M3.3 0.3L0.9 8.3" stroke="#a88860" stroke-width=".6"/><circle cx="1.3" cy="7.8" r="1" fill="#111"/></svg><div class="ab tt" style="left:579px;top:116px;transform:scaleX(0.98);color:#000">Not assigned</div><div class="ab tt" style="left:666px;top:116px;transform:scaleX(0.95);width:23.2px;overflow:hidden;color:#000">None</div><div class="ab cb" style="left:21px;top:135px"><svg width="13" height="13" style="position:absolute;left:-1px;top:-1px;display:block"><path d="M3 6.5l2.6 2.6l4.9-5.4" stroke="#2a2a2a" stroke-width="1.2" fill="none"/></svg></div><div class="ab tt" style="left:63px;top:134px;transform:scaleX(0.87);color:#000">TxD0</div><div class="ab tt" style="left:165px;top:134px;transform:scaleX(0.83);color:#000">PIOR1</div><svg class="ab" style="left:265px;top:136px" width="7" height="9" viewBox="0 0 7 9"><path d="M3.3 0.3L6.6 0.6L3.6 7.3L0.9 8.3Z" fill="#c9aa84"/><path d="M6.6 0.6L3.6 7.3" stroke="#8a6a48" stroke-width=".9"/><path d="M3.3 0.3L0.9 8.3" stroke="#a88860" stroke-width=".6"/><circle cx="1.3" cy="7.8" r="1" fill="#111"/></svg><div class="ab tt" style="left:279px;top:134px;transform:scaleX(0.945);width:295.2px;overflow:hidden;color:#000">P17/EO17/CCD01/TI02/TO02/SO00/TxD0</div><svg class="ab" style="left:565px;top:136px" width="7" height="9" viewBox="0 0 7 9"><path d="M3.3 0.3L6.6 0.6L3.6 7.3L0.9 8.3Z" fill="#c9aa84"/><path d="M6.6 0.6L3.6 7.3" stroke="#8a6a48" stroke-width=".9"/><path d="M3.3 0.3L0.9 8.3" stroke="#a88860" stroke-width=".6"/><circle cx="1.3" cy="7.8" r="1" fill="#111"/></svg><div class="ab tt" style="left:579px;top:134px;transform:scaleX(0.9);color:#000">39</div><div class="ab tt" style="left:666px;top:134px;transform:scaleX(0.95);width:23.2px;overflow:hidden;color:#000">O</div><div class="ab" style="left:0;top:189px;width:688px;height:16px;background:#f0f0f0"></div><svg class="ab" style="left:5px;top:192px" width="7" height="10"><path d="M6 1l-4 4l4 4" stroke="#555" stroke-width="1.8" fill="none"/></svg><div class="ab" style="left:17px;top:189px;width:417px;height:16px;background:#cdcdcd"></div><svg class="ab" style="left:676px;top:192px" width="7" height="10"><path d="M1 1l4 4l-4 4" stroke="#555" stroke-width="1.8" fill="none"/></svg></div><div class="ab" style="left:0;top:331px;width:999px;height:24px;background:#f0f0f0"></div><div class="ab" style="left:0;top:331px;width:999px;height:1px;background:#d6d6d6"></div><div class="ab" style="left:1px;top:331px;width:1px;height:25px;background:#d0d0d0"></div><div class="ab" style="left:2px;top:332px;width:81px;height:23px;background:#fff"></div><div class="ab tab" style="left:9px;top:338px;transform:scaleX(0.99);">Pin Function</div><div class="ab" style="left:83px;top:333px;width:73px;height:22px;background:#eef0f3;border-right:1px solid #e2e2e2;box-sizing:border-box"></div><div class="ab tab" style="left:88px;top:336px;transform:scaleX(0.99);">Pin Number</div><div class="ab" style="left:0;top:355px;width:1001px;height:1px;background:#a8a8a8"></div><div class="ab" style="left:0;top:356px;width:999px;height:18px;background:#f0f0f0"></div><div class="ab tab" style="left:5px;top:358px;transform:scaleX(0.954);">Overview</div><div class="ab" style="left:58px;top:356px;width:1px;height:18px;background:#bcbcbc"></div><div class="ab tab" style="left:62px;top:358px;transform:scaleX(0.93);">Board</div><div class="ab" style="left:97px;top:356px;width:1px;height:18px;background:#bcbcbc"></div><div class="ab tab" style="left:101px;top:358px;transform:scaleX(0.96);">Clocks</div><div class="ab" style="left:140px;top:356px;width:1px;height:18px;background:#bcbcbc"></div><div class="ab tab" style="left:144px;top:358px;transform:scaleX(0.925);">System</div><div class="ab" style="left:186px;top:356px;width:1px;height:18px;background:#bcbcbc"></div><div class="ab tab" style="left:190px;top:358px;transform:scaleX(1.0);">Components</div><div class="ab" style="left:263px;top:356px;width:1px;height:18px;background:#bcbcbc"></div><div class="ab" style="left:264px;top:355px;width:28px;height:19px;background:#f7f7f7"></div><div class="ab tab" style="left:267px;top:358px;transform:scaleX(0.93);">Pins</div><div class="ab" style="left:292px;top:356px;width:1px;height:18px;background:#bcbcbc"></div><div class="ab tab" style="left:296px;top:358px;transform:scaleX(1.03);">Interrupt</div><div class="ab" style="left:346px;top:356px;width:1px;height:18px;background:#bcbcbc"></div><div class="ab" style="left:999px;top:0;width:10px;height:374px;background:#f0f0f0"></div><div class="ab" style="left:1003px;top:0;width:1px;height:374px;background:#8c8c8c"></div><div class="ab" style="left:1008px;top:0;width:1px;height:374px;background:#9c9c9c"></div><div class="ab" style="left:1009px;top:0;width:238px;height:374px;background:#f0f0f0"></div><div class="ab" style="left:1009px;top:0;width:238px;height:34px;background:linear-gradient(#f8f8f8,#f0f0f0)"></div><div class="ab btn" style="left:1017px;top:5px"></div><div class="ab btn" style="left:1053px;top:5px"></div><div class="ab btn" style="left:1089px;top:5px"></div><div class="ab btn" style="left:1125px;top:5px"></div><div class="ab btn" style="left:1161px;top:5px"></div><div class="ab btn" style="left:1197px;top:5px"></div><div class="ab" style="left:1233px;top:5px;width:30px;height:24px;background:#fff;border:1px solid #c0c0c0;border-radius:3px;box-sizing:border-box"><span style="position:absolute;left:6px;top:4px;color:#777;font-size:13px">T</span></div><svg class="ab" style="left:1024px;top:8px" width="18" height="18" viewBox="0 0 18 18"><path d="M1 1h12v12h-12z" fill="#2d6a3a" stroke="#2a4a2a" stroke-dasharray="1 1"/><path d="M3 3h8v8h-8z" fill="#3a8a4a"/><rect x="6" y="7" width="11" height="10" fill="#4a4ab0"/><rect x="8" y="8" width="7" height="3.5" fill="#e8e8f8"/><rect x="9.5" y="13" width="4" height="4" fill="#c8c8e8"/></svg><svg class="ab" style="left:1061px;top:12px" width="17" height="11" viewBox="0 0 17 11"><path d="M0 10.5L9 4L10 10.5Z" fill="#6acc4a"/><path d="M10 10.5L10.5 1L16 10.5Z" fill="#1a6a1a"/><path d="M4 6L7.5 2.5M5 1.5h3v3" stroke="#1a3a8a" stroke-width="1.8" fill="none"/></svg><svg class="ab" style="left:1096px;top:8px" width="20" height="17" viewBox="0 0 20 17"><path d="M1.5 15.5L9 9" stroke="#c89a6a" stroke-width="2.6" stroke-linecap="round"/><path d="M1.5 15.5L3 14" stroke="#6a4a2a" stroke-width="2"/><circle cx="14" cy="6" r="4.8" fill="#dff2ff" stroke="#7aa8cc" stroke-width="1.2"/><path d="M11.5 6h5" stroke="#1a5a9a" stroke-width="1.6"/></svg><svg class="ab" style="left:1132px;top:8px" width="20" height="17" viewBox="0 0 20 17"><path d="M1.5 15.5L9 9" stroke="#c89a6a" stroke-width="2.6" stroke-linecap="round"/><path d="M1.5 15.5L3 14" stroke="#6a4a2a" stroke-width="2"/><circle cx="14" cy="6" r="4.8" fill="#dff2ff" stroke="#7aa8cc" stroke-width="1.2"/><path d="M11.5 6h5M14 3.5v5" stroke="#1a5a9a" stroke-width="1.6"/></svg><svg class="ab" style="left:1171px;top:10px" width="12" height="14" viewBox="0 0 12 14"><path d="M0.5 0.5h8l3 3v10h-11z" fill="#fdfbe8" stroke="#6a6a6a"/><path d="M0.5 10h11v3.5h-11z" fill="#dbeaf8"/><text x="2" y="10" font-size="7" font-weight="bold" font-family="Liberation Sans" fill="#8a6a3a">1:1</text></svg><svg class="ab" style="left:1207px;top:10px" width="12" height="14" viewBox="0 0 12 14"><path d="M0.5 0.5h8l3 3v10h-11z" fill="#fdfbe8" stroke="#6a6a6a"/><path d="M0.5 10h11v3.5h-11z" fill="#dbeaf8"/><path d="M2.5 8.5h7M2.5 8.5l2-1.5M2.5 8.5l2 1.5M9.5 8.5l-2-1.5M9.5 8.5l-2 1.5" stroke="#8a6a3a" stroke-width="1"/></svg><div class="ab" style="left:1009px;top:34px;width:238px;height:1px;background:#c6c6c6"></div><div class="ab" style="left:1011px;top:35px;width:236px;height:1px;background:#e4e4e4"></div><div class="ab" style="left:1011px;top:35px;width:1px;height:298px;background:#dadada"></div><div class="ab" style="left:1012px;top:36px;width:235px;height:297px;background:#f3f3f3;overflow:hidden"><div class="ab" style="left:65.1px;top:53px;width:13.75px;height:46px;background:#86b0cc"></div><div class="ab" style="left:65.1px;top:99px;width:13.75px;height:38px;background:#f6f6f6;border:1px solid #555;border-bottom:none;box-sizing:border-box"></div><div class="ab" style="left:71.975px;top:135px;width:0;height:0"><div style="position:absolute;left:0;top:0;transform:rotate(-90deg) scaleX(0.8);transform-origin:0 0;white-space:nowrap;font-size:7px;line-height:7px;height:7px;color:#000;font-weight:bold;margin-left:-3.50px">P147</div></div><div class="ab" style="left:80.25px;top:53px;width:13.75px;height:46px;background:#86b0cc"></div><div class="ab" style="left:80.25px;top:99px;width:13.75px;height:38px;background:#f6f6f6;border:1px solid #555;border-bottom:none;box-sizing:border-box"></div><div class="ab" style="left:87.125px;top:135px;width:0;height:0"><div style="position:absolute;left:0;top:0;transform:rotate(-90deg) scaleX(0.8);transform-origin:0 0;white-space:nowrap;font-size:7px;line-height:7px;height:7px;color:#000;font-weight:bold;margin-left:-3.50px">P146</div></div><div class="ab" style="left:95.4px;top:53px;width:13.75px;height:46px;background:#86b0cc"></div><div class="ab" style="left:95.4px;top:95px;width:13.75px;height:42px;background:#e80000"></div><div class="ab" style="left:98.20px;top:98px;width:8.15px;height:36px;background:#f6f0f0"></div><div class="ab" style="left:102.275px;top:135px;width:0;height:0"><div style="position:absolute;left:0;top:0;transform:rotate(-90deg) scaleX(0.8);transform-origin:0 0;white-space:nowrap;font-size:7px;line-height:7px;height:7px;color:#000;font-weight:bold;margin-left:-3.50px">P10</div></div><div class="ab" style="left:110.55px;top:53px;width:13.75px;height:46px;background:#8ce08c"></div><svg class="ab" style="left:110.55px;top:53px" width="13.75" height="42" viewBox="0 0 13 42"><path d="M0.5 10.5L6.5 1L12.5 10.5Z" fill="#000"/><path d="M6.5 10V42" stroke="#000" stroke-width="1"/></svg><div class="ab" style="left:117.425px;top:49px;width:0;height:0"><div style="position:absolute;left:0;top:0;transform:rotate(-90deg) scaleX(0.78);transform-origin:0 0;white-space:nowrap;font-size:7px;line-height:7px;height:7px;color:#000;font-weight:bold;margin-left:-3.50px">P11</div></div><div class="ab" style="left:110.55px;top:95px;width:13.75px;height:42px;background:#e80000"></div><div class="ab" style="left:113.35px;top:98px;width:8.15px;height:36px;background:#ff9a50"></div><div class="ab" style="left:117.425px;top:135px;width:0;height:0"><div style="position:absolute;left:0;top:0;transform:rotate(-90deg) scaleX(0.8);transform-origin:0 0;white-space:nowrap;font-size:7px;line-height:7px;height:7px;color:#000;font-weight:bold;margin-left:-3.50px">P11</div></div><div class="ab" style="left:125.7px;top:53px;width:13.75px;height:46px;background:#8ce08c"></div><svg class="ab" style="left:125.7px;top:53px" width="13.75" height="42" viewBox="0 0 13 42"><path d="M0.5 10.5L6.5 1L12.5 10.5Z" fill="#000"/><path d="M6.5 10V42" stroke="#000" stroke-width="1"/></svg><div class="ab" style="left:132.575px;top:49px;width:0;height:0"><div style="position:absolute;left:0;top:0;transform:rotate(-90deg) scaleX(0.78);transform-origin:0 0;white-space:nowrap;font-size:7px;line-height:7px;height:7px;color:#000;font-weight:bold;margin-left:-3.50px">P12</div></div><div class="ab" style="left:125.7px;top:95px;width:13.75px;height:42px;background:#e80000"></div><div class="ab" style="left:128.50px;top:98px;width:8.15px;height:36px;background:#ff9a50"></div><div class="ab" style="left:132.575px;top:135px;width:0;height:0"><div style="position:absolute;left:0;top:0;transform:rotate(-90deg) scaleX(0.8);transform-origin:0 0;white-space:nowrap;font-size:7px;line-height:7px;height:7px;color:#000;font-weight:bold;margin-left:-3.50px">P12</div></div><div class="ab" style="left:140.85px;top:53px;width:13.75px;height:46px;background:#86b0cc"></div><div class="ab" style="left:140.85px;top:99px;width:13.75px;height:38px;background:#f6f6f6;border:1px solid #555;border-bottom:none;box-sizing:border-box"></div><div class="ab" style="left:147.725px;top:135px;width:0;height:0"><div style="position:absolute;left:0;top:0;transform:rotate(-90deg) scaleX(0.8);transform-origin:0 0;white-space:nowrap;font-size:7px;line-height:7px;height:7px;color:#000;font-weight:bold;margin-left:-3.50px">P13</div></div><div class="ab" style="left:156.0px;top:53px;width:13.75px;height:46px;background:#86b0cc"></div><div class="ab" style="left:156.0px;top:99px;width:13.75px;height:38px;background:#f6f6f6;border:1px solid #555;border-bottom:none;box-sizing:border-box"></div><div class="ab" style="left:162.875px;top:135px;width:0;height:0"><div style="position:absolute;left:0;top:0;transform:rotate(-90deg) scaleX(0.8);transform-origin:0 0;white-space:nowrap;font-size:7px;line-height:7px;height:7px;color:#000;font-weight:bold;margin-left:-3.50px">P14</div></div><div class="ab" style="left:171.15px;top:53px;width:13.75px;height:46px;background:#86b0cc"></div><div class="ab" style="left:171.15px;top:99px;width:13.75px;height:38px;background:#f6f6f6;border:1px solid #555;border-bottom:none;box-sizing:border-box"></div><div class="ab" style="left:178.025px;top:135px;width:0;height:0"><div style="position:absolute;left:0;top:0;transform:rotate(-90deg) scaleX(0.8);transform-origin:0 0;white-space:nowrap;font-size:7px;line-height:7px;height:7px;color:#000;font-weight:bold;margin-left:-3.50px">P15</div></div><div class="ab" style="left:186.3px;top:53px;width:13.75px;height:46px;background:#8ce08c"></div><svg class="ab" style="left:186.3px;top:53px" width="13.75" height="42" viewBox="0 0 13 42"><path d="M6.5 1V32" stroke="#000" stroke-width="1"/><path d="M0.5 31L6.5 41L12.5 31Z" fill="#000"/></svg><div class="ab" style="left:193.175px;top:49px;width:0;height:0"><div style="position:absolute;left:0;top:0;transform:rotate(-90deg) scaleX(0.78);transform-origin:0 0;white-space:nowrap;font-size:7px;line-height:7px;height:7px;color:#000;font-weight:bold;margin-left:-3.50px">RxD0</div></div><div class="ab" style="left:186.3px;top:95px;width:13.75px;height:42px;background:#e80000"></div><div class="ab" style="left:189.10px;top:98px;width:8.15px;height:36px;background:#ffb0c0"></div><div class="ab" style="left:193.175px;top:135px;width:0;height:0"><div style="position:absolute;left:0;top:0;transform:rotate(-90deg) scaleX(0.8);transform-origin:0 0;white-space:nowrap;font-size:7px;line-height:7px;height:7px;color:#000;font-weight:bold;margin-left:-3.50px">P16</div></div><div class="ab" style="left:201.45px;top:53px;width:13.75px;height:46px;background:#8ce08c"></div><svg class="ab" style="left:201.45px;top:53px" width="13.75" height="42" viewBox="0 0 13 42"><path d="M0.5 10.5L6.5 1L12.5 10.5Z" fill="#000"/><path d="M6.5 10V42" stroke="#000" stroke-width="1"/></svg><div class="ab" style="left:208.325px;top:49px;width:0;height:0"><div style="position:absolute;left:0;top:0;transform:rotate(-90deg) scaleX(0.78);transform-origin:0 0;white-space:nowrap;font-size:7px;line-height:7px;height:7px;color:#000;font-weight:bold;margin-left:-3.50px">TxD0</div></div><div class="ab" style="left:201.45px;top:95px;width:13.75px;height:42px;background:#e80000"></div><div class="ab" style="left:204.25px;top:98px;width:8.15px;height:36px;background:#ffb0c0"></div><div class="ab" style="left:208.325px;top:135px;width:0;height:0"><div style="position:absolute;left:0;top:0;transform:rotate(-90deg) scaleX(0.8);transform-origin:0 0;white-space:nowrap;font-size:7px;line-height:7px;height:7px;color:#000;font-weight:bold;margin-left:-3.50px">P17</div></div><div class="ab" style="left:216.6px;top:53px;width:13.75px;height:46px;background:#86b0cc"></div><div class="ab" style="left:216.6px;top:95px;width:13.75px;height:42px;background:#e80000"></div><div class="ab" style="left:219.40px;top:98px;width:8.15px;height:36px;background:#f6eeee"></div><div class="ab" style="left:223.475px;top:135px;width:0;height:0"><div style="position:absolute;left:0;top:0;transform:rotate(-90deg) scaleX(0.8);transform-origin:0 0;white-space:nowrap;font-size:7px;line-height:7px;height:7px;color:#000;font-weight:bold;margin-left:-3.50px">P55</div></div><div class="ab" style="left:231.75px;top:53px;width:13.75px;height:46px;background:#86b0cc"></div><div class="ab" style="left:231.75px;top:99px;width:13.75px;height:38px;background:#f6f6f6;border:1px solid #555;border-bottom:none;box-sizing:border-box"></div><div class="ab" style="left:238.625px;top:135px;width:0;height:0"><div style="position:absolute;left:0;top:0;transform:rotate(-90deg) scaleX(0.8);transform-origin:0 0;white-space:nowrap;font-size:7px;line-height:7px;height:7px;color:#000;font-weight:bold;margin-left:-3.50px">P</div></div><div class="ab" style="left:49px;top:137px;width:300px;height:200px;background:#5e5e5e;border-left:1px solid #2a2a2a;border-top:1px solid #2a2a2a;box-sizing:border-box"></div><div class="ab" style="left:65px;top:153px;width:300px;height:200px;background:#4a494e;border-left:1px solid #646464;border-top:1px solid #646464"></div><div class="ab" style="left:72.1px;top:150px;width:0;height:0"><div style="position:absolute;left:0;top:0;transform:rotate(-90deg) scaleX(0.85);transform-origin:0 0;white-space:nowrap;font-size:7px;line-height:7px;height:7px;color:#c8c8c8;font-weight:bold;margin-left:-3.50px">48</div></div><div class="ab" style="left:87.25px;top:150px;width:0;height:0"><div style="position:absolute;left:0;top:0;transform:rotate(-90deg) scaleX(0.85);transform-origin:0 0;white-space:nowrap;font-size:7px;line-height:7px;height:7px;color:#c8c8c8;font-weight:bold;margin-left:-3.50px">47</div></div><div class="ab" style="left:102.4px;top:150px;width:0;height:0"><div style="position:absolute;left:0;top:0;transform:rotate(-90deg) scaleX(0.85);transform-origin:0 0;white-space:nowrap;font-size:7px;line-height:7px;height:7px;color:#c8c8c8;font-weight:bold;margin-left:-3.50px">46</div></div><div class="ab" style="left:117.55px;top:150px;width:0;height:0"><div style="position:absolute;left:0;top:0;transform:rotate(-90deg) scaleX(0.85);transform-origin:0 0;white-space:nowrap;font-size:7px;line-height:7px;height:7px;color:#c8c8c8;font-weight:bold;margin-left:-3.50px">45</div></div><div class="ab" style="left:132.7px;top:150px;width:0;height:0"><div style="position:absolute;left:0;top:0;transform:rotate(-90deg) scaleX(0.85);transform-origin:0 0;white-space:nowrap;font-size:7px;line-height:7px;height:7px;color:#c8c8c8;font-weight:bold;margin-left:-3.50px">44</div></div><div class="ab" style="left:147.85px;top:150px;width:0;height:0"><div style="position:absolute;left:0;top:0;transform:rotate(-90deg) scaleX(0.85);transform-origin:0 0;white-space:nowrap;font-size:7px;line-height:7px;height:7px;color:#c8c8c8;font-weight:bold;margin-left:-3.50px">43</div></div><div class="ab" style="left:163.0px;top:150px;width:0;height:0"><div style="position:absolute;left:0;top:0;transform:rotate(-90deg) scaleX(0.85);transform-origin:0 0;white-space:nowrap;font-size:7px;line-height:7px;height:7px;color:#c8c8c8;font-weight:bold;margin-left:-3.50px">42</div></div><div class="ab" style="left:178.15px;top:150px;width:0;height:0"><div style="position:absolute;left:0;top:0;transform:rotate(-90deg) scaleX(0.85);transform-origin:0 0;white-space:nowrap;font-size:7px;line-height:7px;height:7px;color:#c8c8c8;font-weight:bold;margin-left:-3.50px">41</div></div><div class="ab" style="left:193.3px;top:150px;width:0;height:0"><div style="position:absolute;left:0;top:0;transform:rotate(-90deg) scaleX(0.85);transform-origin:0 0;white-space:nowrap;font-size:7px;line-height:7px;height:7px;color:#c8c8c8;font-weight:bold;margin-left:-3.50px">40</div></div><div class="ab" style="left:208.45px;top:150px;width:0;height:0"><div style="position:absolute;left:0;top:0;transform:rotate(-90deg) scaleX(0.85);transform-origin:0 0;white-space:nowrap;font-size:7px;line-height:7px;height:7px;color:#c8c8c8;font-weight:bold;margin-left:-3.50px">39</div></div><div class="ab" style="left:223.6px;top:150px;width:0;height:0"><div style="position:absolute;left:0;top:0;transform:rotate(-90deg) scaleX(0.85);transform-origin:0 0;white-space:nowrap;font-size:7px;line-height:7px;height:7px;color:#c8c8c8;font-weight:bold;margin-left:-3.50px">38</div></div><div class="ab" style="left:238.75px;top:150px;width:0;height:0"><div style="position:absolute;left:0;top:0;transform:rotate(-90deg) scaleX(0.85);transform-origin:0 0;white-space:nowrap;font-size:7px;line-height:7px;height:7px;color:#c8c8c8;font-weight:bold;margin-left:-3.50px">37</div></div><svg class="ab" style="left:108px;top:224px" width="140" height="34" viewBox="0 0 140 34"><rect x="6" y="18" width="7" height="7" fill="#d4d4d4"/><path d="M5 10.8C9 8 14 6.8 20 7C25 7.3 28.2 9.5 27.8 12.8C27.4 15.6 24.5 17.2 21.2 18.3C24.5 22 28.5 26 33.8 29.8C28.5 28.8 22.5 24.2 16 18.2C20.5 17.2 23.4 15.5 23.5 12.8C23.6 10.2 20 9 14.5 9.2C11 9.4 8 10 5 10.8Z" fill="#d4d4d4"/><text x="30.5" y="25.6" font-size="20.6" font-family="Liberation Sans" fill="#d4d4d4" stroke="#d4d4d4" stroke-width="1.1" textLength="121" lengthAdjust="spacingAndGlyphs">ENESAS</text></svg><div class="ab" style="left:0;top:153px;width:11px;height:14px;background:#86b0cc"></div><div class="ab" style="left:11px;top:153px;width:38px;height:14px;background:#f4f4f4;border:1px solid #444;border-right:none;border-bottom-width:2px;box-sizing:border-box"></div><div class="ab" style="left:14px;top:155px;font-size:7.5px;line-height:10px;-webkit-text-stroke:.2px currentColor;transform:scaleX(.85);transform-origin:0 0;color:#111">P27</div><div class="ab" style="left:52px;top:155px;font-size:7.5px;line-height:10px;font-weight:bold;transform:scaleX(.9);transform-origin:0 0;color:#c4c4c4">49</div><div class="ab" style="left:0;top:168px;width:11px;height:14px;background:#86b0cc"></div><div class="ab" style="left:11px;top:168px;width:38px;height:14px;background:#f4f4f4;border:1px solid #444;border-right:none;border-bottom-width:2px;box-sizing:border-box"></div><div class="ab" style="left:14px;top:170px;font-size:7.5px;line-height:10px;-webkit-text-stroke:.2px currentColor;transform:scaleX(.85);transform-origin:0 0;color:#111">P26</div><div class="ab" style="left:52px;top:170px;font-size:7.5px;line-height:10px;font-weight:bold;transform:scaleX(.9);transform-origin:0 0;color:#c4c4c4">50</div><div class="ab" style="left:0;top:183px;width:11px;height:14px;background:#86b0cc"></div><div class="ab" style="left:11px;top:183px;width:38px;height:14px;background:#f4f4f4;border:1px solid #444;border-right:none;border-bottom-width:2px;box-sizing:border-box"></div><div class="ab" style="left:14px;top:185px;font-size:7.5px;line-height:10px;-webkit-text-stroke:.2px currentColor;transform:scaleX(.85);transform-origin:0 0;color:#111">P25</div><div class="ab" style="left:52px;top:185px;font-size:7.5px;line-height:10px;font-weight:bold;transform:scaleX(.9);transform-origin:0 0;color:#c4c4c4">51</div><div class="ab" style="left:0;top:198px;width:11px;height:14px;background:#86b0cc"></div><div class="ab" style="left:11px;top:198px;width:38px;height:14px;background:#f4f4f4;border:1px solid #444;border-right:none;border-bottom-width:2px;box-sizing:border-box"></div><div class="ab" style="left:14px;top:200px;font-size:7.5px;line-height:10px;-webkit-text-stroke:.2px currentColor;transform:scaleX(.85);transform-origin:0 0;color:#111">P24</div><div class="ab" style="left:52px;top:200px;font-size:7.5px;line-height:10px;font-weight:bold;transform:scaleX(.9);transform-origin:0 0;color:#c4c4c4">52</div><div class="ab" style="left:0;top:214px;width:11px;height:14px;background:#86e086"></div><svg class="ab" style="left:0;top:217px" width="7" height="9"><path d="M0 0L6 4.5L0 9Z" fill="#000"/></svg><div class="ab" style="left:11px;top:214px;width:38px;height:14px;background:#ff30ff;border:1px solid #444;border-right:none;border-bottom-width:2px;box-sizing:border-box"></div><div class="ab" style="left:14px;top:216px;font-size:7.5px;line-height:10px;-webkit-text-stroke:.2px currentColor;transform:scaleX(.85);transform-origin:0 0;color:#8a008a">P23</div><div class="ab" style="left:52px;top:216px;font-size:7.5px;line-height:10px;font-weight:bold;transform:scaleX(.9);transform-origin:0 0;color:#c4c4c4">53</div><div class="ab" style="left:0;top:229px;width:11px;height:14px;background:#86e086"></div><svg class="ab" style="left:0;top:232px" width="7" height="9"><path d="M0 0L6 4.5L0 9Z" fill="#000"/></svg><div class="ab" style="left:11px;top:229px;width:38px;height:14px;background:#ff30ff;border:1px solid #444;border-right:none;border-bottom-width:2px;box-sizing:border-box"></div><div class="ab" style="left:14px;top:231px;font-size:7.5px;line-height:10px;-webkit-text-stroke:.2px currentColor;transform:scaleX(.85);transform-origin:0 0;color:#8a008a">P22</div><div class="ab" style="left:52px;top:231px;font-size:7.5px;line-height:10px;font-weight:bold;transform:scaleX(.9);transform-origin:0 0;color:#c4c4c4">54</div><div class="ab" style="left:0;top:244px;width:11px;height:14px;background:#86e086"></div><svg class="ab" style="left:0;top:247px" width="7" height="9"><path d="M0 0L6 4.5L0 9Z" fill="#000"/></svg><div class="ab" style="left:11px;top:244px;width:38px;height:14px;background:#ff30ff;border:1px solid #444;border-right:none;border-bottom-width:2px;box-sizing:border-box"></div><div class="ab" style="left:14px;top:246px;font-size:7.5px;line-height:10px;-webkit-text-stroke:.2px currentColor;transform:scaleX(.85);transform-origin:0 0;color:#8a008a">P21</div><div class="ab" style="left:52px;top:246px;font-size:7.5px;line-height:10px;font-weight:bold;transform:scaleX(.9);transform-origin:0 0;color:#c4c4c4">55</div><div class="ab" style="left:0;top:259px;width:11px;height:14px;background:#86e086"></div><svg class="ab" style="left:0;top:262px" width="7" height="9"><path d="M0 0L6 4.5L0 9Z" fill="#000"/></svg><div class="ab" style="left:11px;top:259px;width:38px;height:14px;background:#ff30ff;border:1px solid #444;border-right:none;border-bottom-width:2px;box-sizing:border-box"></div><div class="ab" style="left:14px;top:261px;font-size:7.5px;line-height:10px;-webkit-text-stroke:.2px currentColor;transform:scaleX(.85);transform-origin:0 0;color:#8a008a">P20</div><div class="ab" style="left:52px;top:261px;font-size:7.5px;line-height:10px;font-weight:bold;transform:scaleX(.9);transform-origin:0 0;color:#c4c4c4">56</div><div class="ab" style="left:0;top:274px;width:11px;height:14px;background:#86b0cc"></div><div class="ab" style="left:11px;top:274px;width:38px;height:14px;background:#f4f4f4;border:1px solid #444;border-right:none;border-bottom-width:2px;box-sizing:border-box"></div><div class="ab" style="left:14px;top:276px;font-size:7.5px;line-height:10px;-webkit-text-stroke:.2px currentColor;transform:scaleX(.85);transform-origin:0 0;color:#111">P130</div><div class="ab" style="left:52px;top:276px;font-size:7.5px;line-height:10px;font-weight:bold;transform:scaleX(.9);transform-origin:0 0;color:#c4c4c4">57</div><div class="ab" style="left:0;top:289px;width:11px;height:14px;background:#86b0cc"></div><div class="ab" style="left:11px;top:289px;width:38px;height:14px;background:#f4f4f4;border:1px solid #444;border-right:none;border-bottom-width:2px;box-sizing:border-box"></div><div class="ab" style="left:14px;top:291px;font-size:7.5px;line-height:10px;-webkit-text-stroke:.2px currentColor;transform:scaleX(.85);transform-origin:0 0;color:#111">P04</div><div class="ab" style="left:52px;top:291px;font-size:7.5px;line-height:10px;font-weight:bold;transform:scaleX(.9);transform-origin:0 0;color:#c4c4c4">58</div></div><div class="ab" style="left:1011px;top:333px;width:236px;height:15px;background:#f6f6f6;border-top:1px solid #d8d8d8;box-sizing:border-box"></div><svg class="ab" style="left:1017px;top:339px" width="5" height="6"><path d="M5 0L0 3L5 6Z" fill="#888"/></svg><div class="ab" style="left:1087px;top:334px;width:170px;height:13px;background:linear-gradient(#f4f4f4,#e2e2e2);border:1px solid #c8c8c8;border-radius:2px;box-sizing:border-box"></div><div class="ab" style="left:1011px;top:348px;width:236px;height:3px;background:#e4e4e4"></div><div class="ab" style="left:1011px;top:351px;width:236px;height:23px;background:linear-gradient(#f6f6f6,#e8e8e8);border-top:1px solid #d4d4d4;box-sizing:border-box"></div><svg class="ab" style="left:1021px;top:359px" width="6" height="8"><path d="M0 0L5.5 4L0 8Z" fill="#555"/></svg><div class="ab" style="left:1035px;top:356px;color:#333;font-size:12px;white-space:nowrap">Legend</div></div></body></html>
